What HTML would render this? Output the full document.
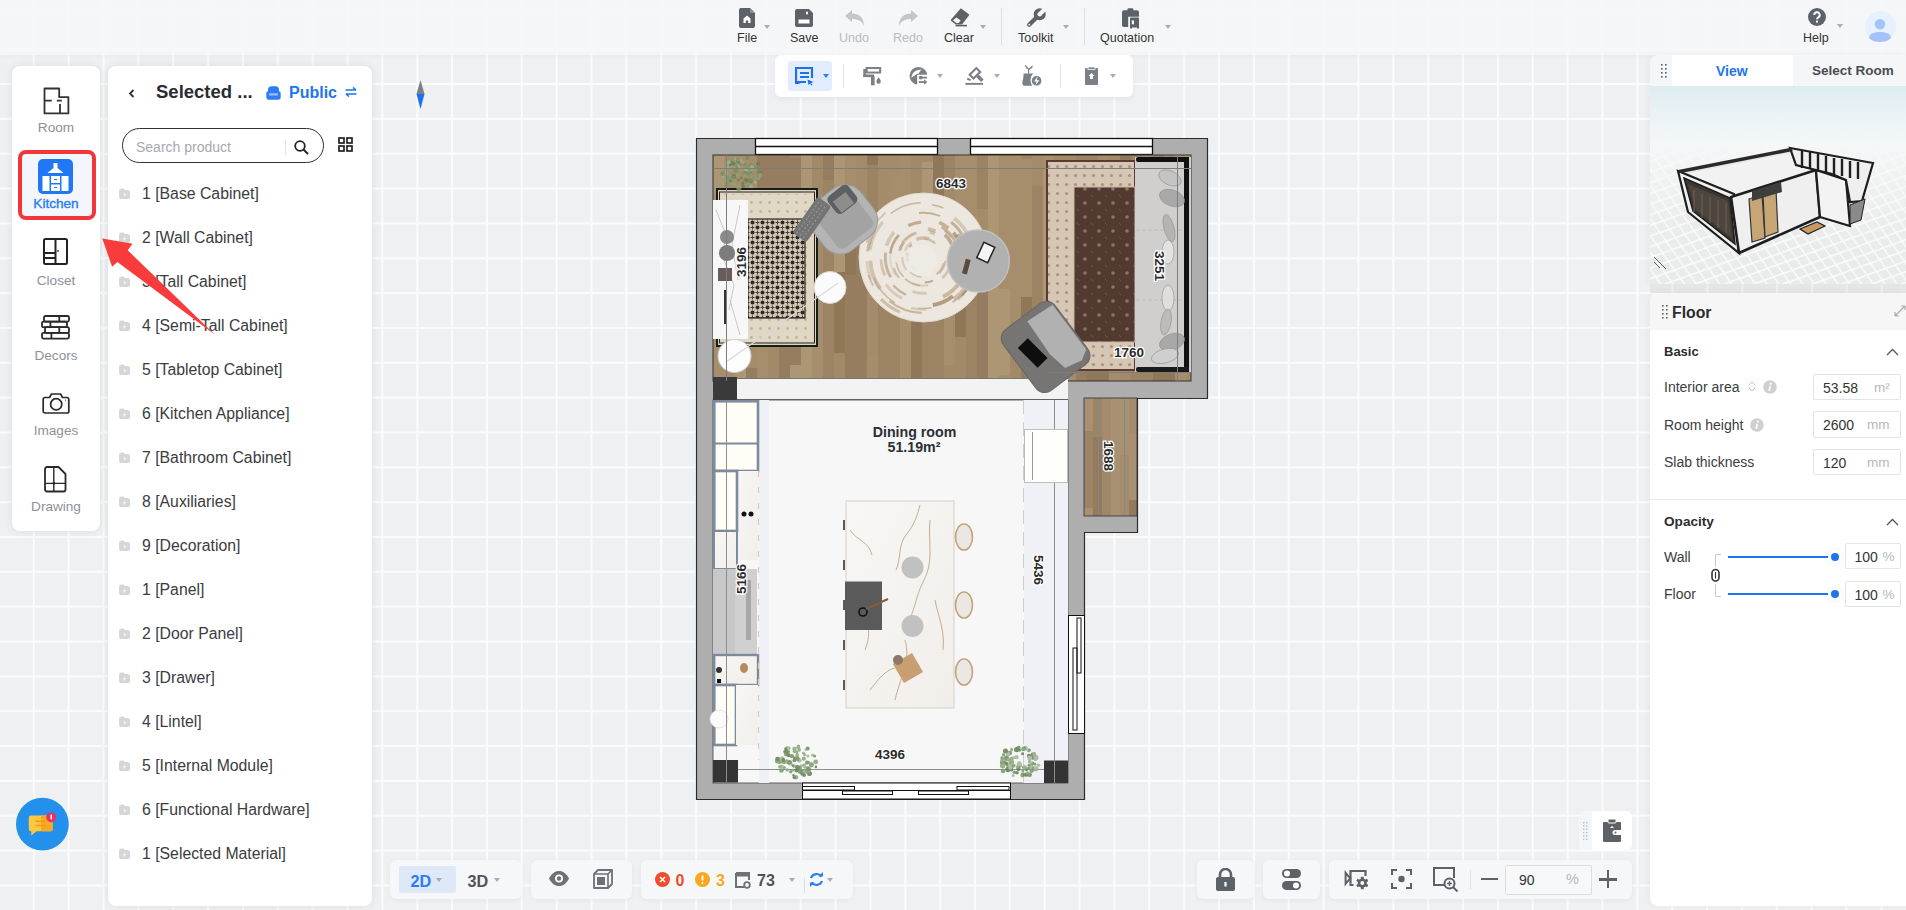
<!DOCTYPE html>
<html><head><meta charset="utf-8">
<style>
*{box-sizing:border-box;margin:0;padding:0}
html,body{width:1906px;height:910px;overflow:hidden;font-family:"Liberation Sans",sans-serif;color:#333}
body{position:relative;background-color:#eff0f2;
background-image:linear-gradient(90deg,#fafbfc 1.5px,transparent 1.5px),linear-gradient(180deg,#fafbfc 1.5px,transparent 1.5px);
background-size:34.867px 34.85px;background-position:32.8px 48.2px}
.abs{position:absolute}
#topbar{position:absolute;left:0;top:0;width:1906px;height:55px;background:rgba(245,246,248,0.93);box-shadow:0 1px 4px rgba(0,0,0,0.04)}
.tb{position:absolute;top:0;height:55px;text-align:center;font-size:13px;color:#333}
.tb .lbl{position:absolute;top:30px;left:0;right:0;text-align:center;white-space:nowrap}
.tb svg{position:absolute}
.dd{position:absolute;width:0;height:0;border-left:3.5px solid transparent;border-right:3.5px solid transparent;border-top:4px solid #a9adb3}
.panel{position:absolute;background:#fff;border-radius:8px;box-shadow:0 0 10px rgba(0,0,0,0.08)}
#leftnav{left:12px;top:66px;width:88px;height:465px}
.nav{position:absolute;left:0;width:88px;text-align:center;font-size:13.6px;color:#8c9199}
#plist{left:108px;top:66px;width:264px;height:840px}
.item{position:absolute;left:34px;font-size:15.8px;color:#3a3c40;white-space:nowrap}
.fold{position:absolute;left:11px;width:11px;height:10px;background:#dcdcdc;border-radius:2px}
.lbl13{font-size:12.5px;color:#333;white-space:nowrap}
.bt{background:#f6f7f8;border-radius:6px;box-shadow:0 1px 5px rgba(0,0,0,0.05)}
.lab{left:14px;font-size:14px;color:#3a3c40;white-space:nowrap}
.inp{left:163px;width:88px;border:1px solid #e2e3e5;border-radius:2px;background:#fff}
.inp .v{position:absolute;left:9px;top:5px;font-size:14px;color:#333}
.inp .u{position:absolute;top:5px;font-size:13.5px;color:#b5b8bc}
.knob{left:181px;width:8px;height:8px;border-radius:50%;background:#1f74ef;box-shadow:0 0 0 3px #fff,0 0 4px 3px rgba(0,0,0,0.08)}
</style></head>
<body>

<!-- TOP BAR -->
<div id="topbar">
 <!-- File -->
 <svg class="abs" style="left:739px;top:8px" width="16" height="20" viewBox="0 0 16 20"><path d="M2 0h9l5 5v13a2 2 0 0 1-2 2H2a2 2 0 0 1-2-2V2a2 2 0 0 1 2-2z" fill="#5d6168"/><path d="M11 0v5h5" fill="#8b8f95"/><path d="M4.5 15V10.5L8 7.5l3.5 3V15h-2.3v-2.6H6.8V15z" fill="#fff"/></svg>
 <div class="abs lbl13" style="left:737px;top:31.3px">File</div>
 <div class="dd" style="left:764px;top:25px"></div>
 <!-- Save -->
 <svg class="abs" style="left:795px;top:9px" width="18" height="18" viewBox="0 0 18 18"><path d="M2 0h12l4 4v12a2 2 0 0 1-2 2H2a2 2 0 0 1-2-2V2a2 2 0 0 1 2-2z" fill="#5d6168"/><rect x="3.5" y="10.5" width="11" height="4" fill="#fff"/><rect x="11" y="2.5" width="2" height="3" rx="1" fill="#fff"/></svg>
 <div class="abs lbl13" style="left:790px;top:31.3px">Save</div>
 <!-- Undo -->
 <svg class="abs" style="left:845px;top:10px" width="20" height="16" viewBox="0 0 20 16"><path d="M0 6L7 0v3.5c7 0 12 4 12 12.5c-2-5-6-7-12-7V12z" fill="#c3c6cb"/></svg>
 <div class="abs lbl13" style="left:839px;top:31.3px;color:#b8bcc2">Undo</div>
 <!-- Redo -->
 <svg class="abs" style="left:898px;top:10px" width="20" height="16" viewBox="0 0 20 16"><path d="M20 6L13 0v3.5c-7 0-12 4-12 12.5c2-5 6-7 12-7V12z" fill="#c3c6cb"/></svg>
 <div class="abs lbl13" style="left:893px;top:31.3px;color:#b8bcc2">Redo</div>
 <!-- Clear -->
 <svg class="abs" style="left:950px;top:8px" width="20" height="19" viewBox="0 0 20 19"><path d="M10.8 0.3L18.9 6.3Q19.4 6.8 18.9 7.4L12 16.4H5.8L1.2 12.9Q0.4 12.2 1.1 11.4Z" fill="#5d6168"/><path d="M2.9 12.2L6.5 9.4L10.7 12.6L8.5 15H6.3Z" fill="#f5f6f8"/><rect x="5.5" y="16.8" width="11.5" height="1.6" fill="#5d6168"/></svg>
 <div class="abs lbl13" style="left:944px;top:31.3px">Clear</div>
 <div class="dd" style="left:980px;top:25px"></div>
 <div class="abs" style="left:1001px;top:8px;width:1px;height:37px;background:#dcdee1"></div>
 <!-- Toolkit -->
 <svg class="abs" style="left:1027px;top:8px" width="20" height="20" viewBox="0 0 20 20"><path d="M12.3 6.7L2.2 16.8" stroke="#5d6168" stroke-width="4.2" stroke-linecap="round"/><circle cx="12.7" cy="6.3" r="6" fill="#5d6168"/><circle cx="12.7" cy="6.3" r="2.2" fill="#f5f6f8"/><path d="M13.2 5.8L19 0" stroke="#f5f6f8" stroke-width="4.2"/><circle cx="2.3" cy="16.7" r="0.9" fill="#f5f6f8"/></svg>
 <div class="abs lbl13" style="left:1018px;top:31.3px">Toolkit</div>
 <div class="dd" style="left:1063px;top:25px"></div>
 <div class="abs" style="left:1084px;top:8px;width:1px;height:37px;background:#dcdee1"></div>
 <!-- Quotation -->
 <svg class="abs" style="left:1122px;top:8px" width="18" height="21" viewBox="0 0 18 21"><path d="M2 2.2h13a2 2 0 0 1 2 2v4.6H6.2V19H2a2 2 0 0 1-2-2V4.2a2 2 0 0 1 2-2z" fill="#5d6168"/><rect x="5.5" y="0.3" width="5.8" height="3" rx="1" fill="#5d6168"/><rect x="8" y="9.6" width="9" height="9.8" rx="1" fill="#5d6168"/><rect x="9.8" y="12.4" width="2.2" height="3.9" fill="#f5f6f8"/><rect x="8" y="18.5" width="2" height="2" fill="#5d6168"/><rect x="15" y="18.5" width="2" height="2" fill="#5d6168"/></svg>
 <div class="abs lbl13" style="left:1100px;top:31.3px">Quotation</div>
 <div class="dd" style="left:1165px;top:25px"></div>
 <!-- Help -->
 <svg class="abs" style="left:1808px;top:8px" width="18" height="18" viewBox="0 0 18 18"><circle cx="9" cy="9" r="9" fill="#5d636b"/><path d="M6.3 7a2.7 2.7 0 1 1 4 2.3c-.9.5-1.3 1-1.3 2" stroke="#fff" stroke-width="2" fill="none"/><rect x="8" y="12.6" width="2" height="2" fill="#fff"/></svg>
 <div class="abs lbl13" style="left:1803px;top:31.3px">Help</div>
 <div class="dd" style="left:1837px;top:24px"></div>
 <!-- Avatar -->
 <svg class="abs" style="left:1865px;top:11px" width="31" height="31" viewBox="0 0 31 31"><circle cx="15.5" cy="15.5" r="15.5" fill="#e7f0fd"/><circle cx="15" cy="13.2" r="5.2" fill="#a4c3fb"/><path d="M4 27c0-4 5-6 11-6s11 2 11 6c-3 3-7 4-11 4s-8-1-11-4z" fill="#a4c3fb"/></svg>
</div>

<!-- LEFT NAV -->
<div id="leftnav" class="panel">
 <!-- Room -->
 <svg class="abs" style="left:30px;top:21px" width="28" height="28" viewBox="0 0 28 28"><path d="M2.5 1.5H17.2V10.2H26.4V26.4H2.5Z" fill="none" stroke="#333" stroke-width="1.8" stroke-linejoin="round"/><path d="M2.5 13.6H9.8M14.8 13.6H19.8M18 17V26.4" stroke="#333" stroke-width="1.8"/></svg>
 <div class="nav" style="top:53.5px">Room</div>
 <!-- Kitchen selected -->
 <div class="abs" style="left:6px;top:84px;width:78px;height:70px;border:4px solid #f2373b;border-radius:8px;background:#f3f7fd"></div>
 <svg class="abs" style="left:26px;top:93px" width="35" height="35" viewBox="0 0 35 35"><rect width="35" height="35" rx="5" fill="#2178f5"/><path d="M15.5 4h4v5l6 5h-16l6-5z" fill="#fff"/><rect x="4.5" y="17" width="7" height="15" fill="#fff"/><rect x="13" y="17" width="9" height="7" fill="#fff"/><rect x="13" y="25.5" width="9" height="6.5" fill="#fff"/><rect x="23.5" y="17" width="7" height="15" fill="#fff"/><path d="M16 20.5h3M16 28.5h3" stroke="#2178f5" stroke-width="1"/></svg>
 <div class="nav" style="top:130px;color:#2b7bf0;-webkit-text-stroke:0.35px #2b7bf0">Kitchen</div>
 <!-- Closet -->
 <svg class="abs" style="left:31px;top:172px" width="25" height="27" viewBox="0 0 25 27"><rect x="1" y="1" width="23" height="25" rx="1.5" fill="none" stroke="#222" stroke-width="2"/><path d="M12.5 1v25M1 15h11.5M1 20h11.5" stroke="#222" stroke-width="2"/><path d="M15 12v2" stroke="#222" stroke-width="1.2"/></svg>
 <div class="nav" style="top:206.5px">Closet</div>
 <!-- Decors -->
 <svg class="abs" style="left:29px;top:249px" width="29" height="25" viewBox="0 0 29 25"><g fill="none" stroke="#2a2a2a" stroke-width="1.8" stroke-linejoin="round"><rect x="3" y="1" width="25" height="5.6" rx="1.5"/><rect x="1" y="6.6" width="25" height="5.6" rx="1.5"/><rect x="4" y="12.2" width="24" height="5.6" rx="1.5"/><rect x="1" y="17.8" width="27" height="5.8" rx="1.5"/><path d="M18.3 1v5.6M9.4 6.6v5.6M18.3 12.2v5.6M10.4 17.8v5.8"/></g></svg>
 <div class="nav" style="top:282px">Decors</div>
 <!-- Images -->
 <svg class="abs" style="left:29.5px;top:327px" width="28" height="21" viewBox="0 0 28 21"><path d="M3 4.5h4.5l2-3.5h9l2 3.5H25a1.8 1.8 0 0 1 1.8 1.8v11.9a1.8 1.8 0 0 1-1.8 1.8H3a1.8 1.8 0 0 1-1.8-1.8V6.3A1.8 1.8 0 0 1 3 4.5z" fill="none" stroke="#2a2a2a" stroke-width="1.7" stroke-linejoin="round"/><circle cx="14.2" cy="11.3" r="5.6" fill="none" stroke="#2a2a2a" stroke-width="1.7"/><circle cx="23.5" cy="7" r="0.6" fill="#2a2a2a"/></svg>
 <div class="nav" style="top:357px">Images</div>
 <!-- Drawing -->
 <svg class="abs" style="left:32px;top:400px" width="23" height="27" viewBox="0 0 23 27"><path d="M3 1h11.5l7 7v15.5a2 2 0 0 1-2 2H3a2 2 0 0 1-2-2V3a2 2 0 0 1 2-2z" fill="none" stroke="#2a2a2a" stroke-width="1.8" stroke-linejoin="round"/><path d="M9.8 1v24.5M1 17.4h20.5" stroke="#2a2a2a" stroke-width="1.4"/><circle cx="9.8" cy="17.4" r="1.4" fill="#2a2a2a"/></svg>
 <div class="nav" style="top:433px">Drawing</div>
</div>

<!-- PRODUCT LIST -->
<div id="plist" class="panel">
 <svg class="abs" style="left:20px;top:23px" width="7" height="9" viewBox="0 0 7 9"><path d="M5.5 1L2 4.5 5.5 8" fill="none" stroke="#333" stroke-width="1.8"/></svg>
 <div class="abs" style="left:48px;top:15px;font-size:18.5px;font-weight:700;color:#2a2c30;white-space:nowrap">Selected ...</div>
 <svg class="abs" style="left:158px;top:20px" width="15" height="14" viewBox="0 0 15 14"><rect x="2" y="0.3" width="11" height="8" rx="3.6" fill="#2d7cf2"/><rect x="0.3" y="5" width="14.4" height="8.7" rx="2.6" fill="#2d7cf2"/><rect x="3" y="7.2" width="9" height="2.4" rx="0.6" fill="#9cc0f8"/></svg>
 <div class="abs" style="left:181px;top:17.5px;font-size:16px;font-weight:700;color:#1f74ef;white-space:nowrap">Public</div>
 <svg class="abs" style="left:237px;top:21px" width="12" height="10" viewBox="0 0 12 10"><path d="M0.5 3h10.5M8 0.5l3 2.5M11.5 7H1M4 9.5L1 7" fill="none" stroke="#1f74ef" stroke-width="1.6"/></svg>
 <div class="abs" style="left:14px;top:62px;width:202px;height:35px;border:1.3px solid #2f3135;border-radius:18px"></div>
 <div class="abs" style="left:28px;top:73px;font-size:14px;color:#a5a9b0;white-space:nowrap">Search product</div>
 <div class="abs" style="left:177px;top:74px;width:1px;height:15px;background:#e3e3e3"></div>
 <svg class="abs" style="left:186px;top:74px" width="15" height="15" viewBox="0 0 15 15"><circle cx="6" cy="6" r="4.8" fill="none" stroke="#222" stroke-width="1.8"/><path d="M9.5 9.5L14 14" stroke="#222" stroke-width="2"/></svg>
 <svg class="abs" style="left:230px;top:71px" width="15" height="15" viewBox="0 0 15 15"><rect x="1" y="1" width="5" height="5" fill="none" stroke="#222" stroke-width="1.7"/><rect x="9" y="1" width="5" height="5" fill="none" stroke="#222" stroke-width="1.7"/><rect x="1" y="9" width="5" height="5" fill="none" stroke="#222" stroke-width="1.7"/><rect x="9" y="9" width="5" height="5" fill="none" stroke="#222" stroke-width="1.7"/></svg>
 <svg class="abs" style="left:11px;top:122px" width="11" height="11" viewBox="0 0 11 11"><path d="M0 3.2Q0 0.6 2.6 0.6H4.6L6 2H8.6Q11 2 11 4.6V8.4Q11 11 8.4 11H2.6Q0 11 0 8.4Z" fill="#d6d6d6"/><path d="M5.5 5v3.6M3.7 6.8h3.6" stroke="#f4f4f4" stroke-width="0.9"/></svg>
 <div class="item" style="top:118.5px">1 [Base Cabinet]</div>
 <svg class="abs" style="left:11px;top:166px" width="11" height="11" viewBox="0 0 11 11"><path d="M0 3.2Q0 0.6 2.6 0.6H4.6L6 2H8.6Q11 2 11 4.6V8.4Q11 11 8.4 11H2.6Q0 11 0 8.4Z" fill="#d6d6d6"/><path d="M5.5 5v3.6M3.7 6.8h3.6" stroke="#f4f4f4" stroke-width="0.9"/></svg>
 <div class="item" style="top:162.5px">2 [Wall Cabinet]</div>
 <svg class="abs" style="left:11px;top:210px" width="11" height="11" viewBox="0 0 11 11"><path d="M0 3.2Q0 0.6 2.6 0.6H4.6L6 2H8.6Q11 2 11 4.6V8.4Q11 11 8.4 11H2.6Q0 11 0 8.4Z" fill="#d6d6d6"/><path d="M5.5 5v3.6M3.7 6.8h3.6" stroke="#f4f4f4" stroke-width="0.9"/></svg>
 <div class="item" style="top:206.5px">3 [Tall Cabinet]</div>
 <svg class="abs" style="left:11px;top:254px" width="11" height="11" viewBox="0 0 11 11"><path d="M0 3.2Q0 0.6 2.6 0.6H4.6L6 2H8.6Q11 2 11 4.6V8.4Q11 11 8.4 11H2.6Q0 11 0 8.4Z" fill="#d6d6d6"/><path d="M5.5 5v3.6M3.7 6.8h3.6" stroke="#f4f4f4" stroke-width="0.9"/></svg>
 <div class="item" style="top:250.5px">4 [Semi-Tall Cabinet]</div>
 <svg class="abs" style="left:11px;top:298px" width="11" height="11" viewBox="0 0 11 11"><path d="M0 3.2Q0 0.6 2.6 0.6H4.6L6 2H8.6Q11 2 11 4.6V8.4Q11 11 8.4 11H2.6Q0 11 0 8.4Z" fill="#d6d6d6"/><path d="M5.5 5v3.6M3.7 6.8h3.6" stroke="#f4f4f4" stroke-width="0.9"/></svg>
 <div class="item" style="top:294.5px">5 [Tabletop Cabinet]</div>
 <svg class="abs" style="left:11px;top:342px" width="11" height="11" viewBox="0 0 11 11"><path d="M0 3.2Q0 0.6 2.6 0.6H4.6L6 2H8.6Q11 2 11 4.6V8.4Q11 11 8.4 11H2.6Q0 11 0 8.4Z" fill="#d6d6d6"/><path d="M5.5 5v3.6M3.7 6.8h3.6" stroke="#f4f4f4" stroke-width="0.9"/></svg>
 <div class="item" style="top:338.5px">6 [Kitchen Appliance]</div>
 <svg class="abs" style="left:11px;top:386px" width="11" height="11" viewBox="0 0 11 11"><path d="M0 3.2Q0 0.6 2.6 0.6H4.6L6 2H8.6Q11 2 11 4.6V8.4Q11 11 8.4 11H2.6Q0 11 0 8.4Z" fill="#d6d6d6"/><path d="M5.5 5v3.6M3.7 6.8h3.6" stroke="#f4f4f4" stroke-width="0.9"/></svg>
 <div class="item" style="top:382.5px">7 [Bathroom Cabinet]</div>
 <svg class="abs" style="left:11px;top:430px" width="11" height="11" viewBox="0 0 11 11"><path d="M0 3.2Q0 0.6 2.6 0.6H4.6L6 2H8.6Q11 2 11 4.6V8.4Q11 11 8.4 11H2.6Q0 11 0 8.4Z" fill="#d6d6d6"/><path d="M5.5 5v3.6M3.7 6.8h3.6" stroke="#f4f4f4" stroke-width="0.9"/></svg>
 <div class="item" style="top:426.5px">8 [Auxiliaries]</div>
 <svg class="abs" style="left:11px;top:474px" width="11" height="11" viewBox="0 0 11 11"><path d="M0 3.2Q0 0.6 2.6 0.6H4.6L6 2H8.6Q11 2 11 4.6V8.4Q11 11 8.4 11H2.6Q0 11 0 8.4Z" fill="#d6d6d6"/><path d="M5.5 5v3.6M3.7 6.8h3.6" stroke="#f4f4f4" stroke-width="0.9"/></svg>
 <div class="item" style="top:470.5px">9 [Decoration]</div>
 <svg class="abs" style="left:11px;top:518px" width="11" height="11" viewBox="0 0 11 11"><path d="M0 3.2Q0 0.6 2.6 0.6H4.6L6 2H8.6Q11 2 11 4.6V8.4Q11 11 8.4 11H2.6Q0 11 0 8.4Z" fill="#d6d6d6"/><path d="M5.5 5v3.6M3.7 6.8h3.6" stroke="#f4f4f4" stroke-width="0.9"/></svg>
 <div class="item" style="top:514.5px">1 [Panel]</div>
 <svg class="abs" style="left:11px;top:562px" width="11" height="11" viewBox="0 0 11 11"><path d="M0 3.2Q0 0.6 2.6 0.6H4.6L6 2H8.6Q11 2 11 4.6V8.4Q11 11 8.4 11H2.6Q0 11 0 8.4Z" fill="#d6d6d6"/><path d="M5.5 5v3.6M3.7 6.8h3.6" stroke="#f4f4f4" stroke-width="0.9"/></svg>
 <div class="item" style="top:558.5px">2 [Door Panel]</div>
 <svg class="abs" style="left:11px;top:606px" width="11" height="11" viewBox="0 0 11 11"><path d="M0 3.2Q0 0.6 2.6 0.6H4.6L6 2H8.6Q11 2 11 4.6V8.4Q11 11 8.4 11H2.6Q0 11 0 8.4Z" fill="#d6d6d6"/><path d="M5.5 5v3.6M3.7 6.8h3.6" stroke="#f4f4f4" stroke-width="0.9"/></svg>
 <div class="item" style="top:602.5px">3 [Drawer]</div>
 <svg class="abs" style="left:11px;top:650px" width="11" height="11" viewBox="0 0 11 11"><path d="M0 3.2Q0 0.6 2.6 0.6H4.6L6 2H8.6Q11 2 11 4.6V8.4Q11 11 8.4 11H2.6Q0 11 0 8.4Z" fill="#d6d6d6"/><path d="M5.5 5v3.6M3.7 6.8h3.6" stroke="#f4f4f4" stroke-width="0.9"/></svg>
 <div class="item" style="top:646.5px">4 [Lintel]</div>
 <svg class="abs" style="left:11px;top:694px" width="11" height="11" viewBox="0 0 11 11"><path d="M0 3.2Q0 0.6 2.6 0.6H4.6L6 2H8.6Q11 2 11 4.6V8.4Q11 11 8.4 11H2.6Q0 11 0 8.4Z" fill="#d6d6d6"/><path d="M5.5 5v3.6M3.7 6.8h3.6" stroke="#f4f4f4" stroke-width="0.9"/></svg>
 <div class="item" style="top:690.5px">5 [Internal Module]</div>
 <svg class="abs" style="left:11px;top:738px" width="11" height="11" viewBox="0 0 11 11"><path d="M0 3.2Q0 0.6 2.6 0.6H4.6L6 2H8.6Q11 2 11 4.6V8.4Q11 11 8.4 11H2.6Q0 11 0 8.4Z" fill="#d6d6d6"/><path d="M5.5 5v3.6M3.7 6.8h3.6" stroke="#f4f4f4" stroke-width="0.9"/></svg>
 <div class="item" style="top:734.5px">6 [Functional Hardware]</div>
 <svg class="abs" style="left:11px;top:782px" width="11" height="11" viewBox="0 0 11 11"><path d="M0 3.2Q0 0.6 2.6 0.6H4.6L6 2H8.6Q11 2 11 4.6V8.4Q11 11 8.4 11H2.6Q0 11 0 8.4Z" fill="#d6d6d6"/><path d="M5.5 5v3.6M3.7 6.8h3.6" stroke="#f4f4f4" stroke-width="0.9"/></svg>
 <div class="item" style="top:778.5px">1 [Selected Material]</div>
</div>


<!-- FLOATING TOOLBAR -->
<div class="abs" style="left:775px;top:55px;width:358px;height:42px;background:#fff;border-radius:6px;box-shadow:0 2px 6px rgba(0,0,0,0.05)">
 <div class="abs" style="left:13px;top:6px;width:44px;height:30px;background:#e1edfd;border-radius:3px"></div>
 <svg class="abs" style="left:20px;top:12px" width="19" height="19" viewBox="0 0 19 19"><path d="M1 17V1h16v10" fill="none" stroke="#1f6ff0" stroke-width="2.2"/><path d="M1 17v-2h10" stroke="#1f6ff0" stroke-width="2"/><path d="M5 6h9M5 10h9" stroke="#1f6ff0" stroke-width="2.2"/><path d="M12.5 12.5l6 2.5-2.5 1 1.5 2-1 .5-1.5-2-1.5 1.5z" fill="#1f6ff0"/></svg>
 <div class="dd" style="left:48px;top:19px;border-top-color:#2f7cf2"></div>
 <div class="abs" style="left:68px;top:9px;width:1px;height:24px;background:#e3e4e6"></div>
 <svg class="abs" style="left:88px;top:12px" width="20" height="19" viewBox="0 0 20 19"><rect x="2.5" y="0" width="15.7" height="6.4" rx="0.6" fill="#7b7f86"/><rect x="4.7" y="2" width="11.4" height="2.6" fill="#fff"/><rect x="0.3" y="2" width="2.6" height="8" fill="#7b7f86"/><rect x="0.3" y="7.5" width="10.8" height="2.6" fill="#7b7f86"/><rect x="8" y="9.5" width="3.6" height="8.8" fill="#7b7f86"/><path d="M15.6 10.2c-1.6 2.1-2.2 3.2-2.2 4.3a2.2 2.2 0 0 0 4.4 0c0-1.1-.6-2.2-2.2-4.3z" fill="#7b7f86"/></svg>
 <svg class="abs" style="left:134px;top:12px" width="20" height="19" viewBox="0 0 20 19"><path d="M18.1 7.7A8.8 8.8 0 1 0 8.2 17.55V7.7Z" fill="#7b7f86"/><path d="M2.6 11.2C2.4 6.4 6.4 2.4 12.8 2.6C11 4 10.3 5.1 10 6.6C8 6.7 6.4 7.5 5.8 8.8C4.6 9 3.6 9.8 2.6 11.2z" fill="#fff"/><path d="M11.2 10.6H18" stroke="#7b7f86" stroke-width="1.8"/><circle cx="11.7" cy="10.6" r="1.9" fill="#7b7f86"/><path d="M9.8 15H16" stroke="#7b7f86" stroke-width="1.8"/><path d="M15.2 12.3L18.3 15L15.2 17.8z" fill="#7b7f86"/></svg>
 <div class="dd" style="left:162px;top:19px"></div>
 <svg class="abs" style="left:190px;top:12px" width="19" height="19" viewBox="0 0 19 19"><g transform="rotate(-45 10 6.4)"><rect x="5.3" y="3.6" width="9.4" height="5.4" fill="none" stroke="#7b7f86" stroke-width="2.1"/><rect x="8.2" y="9.8" width="3.6" height="7" fill="#7b7f86"/></g><path d="M2.2 11.6l3.4 1.6" stroke="#7b7f86" stroke-width="2"/><rect x="0.4" y="15.9" width="17.6" height="1.9" fill="#7b7f86"/></svg>
 <div class="dd" style="left:219px;top:19px"></div>
 <svg class="abs" style="left:247px;top:10px" width="21" height="22" viewBox="0 0 21 22"><path d="M6.6 8.8V3.8M6.6 4.2L3 0.4M6.6 4.8L10.5 1M4.2 1.2l.8 2.4M9 3l1.2-.6" stroke="#7b7f86" stroke-width="1.2" fill="none"/><path d="M1.6 8.6H11.5C9.6 10 8.6 12.5 8.6 15.5c0 2.4.8 4.2 1.8 5.2H2.4C1 20.7.3 19.5.3 17.8c0-2.2 1-3 1-5.2z" fill="#7b7f86"/><circle cx="14.6" cy="15.8" r="5.3" fill="#7b7f86" stroke="#fff" stroke-width="1"/><path d="M15.6 11.6l-3.6 5h2.6l-1 3.6 3.8-5h-2.6z" fill="#fff"/></svg>
 <div class="abs" style="left:285px;top:9px;width:1px;height:24px;background:#e3e4e6"></div>
 <svg class="abs" style="left:310px;top:12px" width="13" height="18" viewBox="0 0 13 18"><rect x="0" y="1" width="13" height="17" rx="1" fill="#7b7f86"/><rect x="3" y="0" width="7" height="2.5" fill="#7b7f86" stroke="#fff" stroke-width="0.8"/><path d="M6.5 6l3 3H8v3H5V9H3.5z" fill="#fff"/></svg>
 <div class="dd" style="left:335px;top:19px"></div>
</div>

<!-- BOTTOM LEFT TOOLBARS -->
<div class="abs bt" style="left:390px;top:860px;width:132px;height:39px"></div>
<div class="abs" style="left:399px;top:866px;width:57px;height:27px;background:#dde8f9;border-radius:2px"></div>
<div class="abs" style="left:410.5px;top:871.5px;font-size:16.2px;font-weight:700;color:#2a7cf2">2D</div>
<div class="dd" style="left:436px;top:878px;border-top-color:#a9adb3"></div>
<div class="abs" style="left:467.5px;top:871.5px;font-size:16.2px;font-weight:700;color:#50545a">3D</div>
<div class="dd" style="left:494px;top:878px"></div>
<div class="abs bt" style="left:531px;top:860px;width:101px;height:39px"></div>
<svg class="abs" style="left:549px;top:871px" width="20" height="15" viewBox="0 0 20 15"><path d="M0 7.5C2.5 2.5 6 0 10 0s7.5 2.5 10 7.5C17.5 12.5 14 15 10 15S2.5 12.5 0 7.5z" fill="#6d7178"/><circle cx="10" cy="7.5" r="4" fill="#fff"/><circle cx="10" cy="7.5" r="2.2" fill="#6d7178"/></svg>
<svg class="abs" style="left:593px;top:869px" width="20" height="20" viewBox="0 0 20 20"><path d="M1 5l4-4h14v14l-4 4H1z" fill="none" stroke="#6d7178" stroke-width="1.8" stroke-linejoin="round"/><path d="M1 5h14v14M15 5l4-4" fill="none" stroke="#6d7178" stroke-width="1.6"/><rect x="4" y="8" width="8" height="8" fill="#6d7178"/></svg>
<div class="abs bt" style="left:641px;top:860px;width:212px;height:39px"></div>
<svg class="abs" style="left:655px;top:872px" width="15" height="15" viewBox="0 0 15 15"><circle cx="7.5" cy="7.5" r="7.5" fill="#f04b2c"/><path d="M5 5l5 5M10 5l-5 5" stroke="#fff" stroke-width="1.6"/></svg>
<div class="abs" style="left:675.5px;top:871.5px;font-size:16px;font-weight:700;color:#f04b2c">0</div>
<svg class="abs" style="left:695px;top:872px" width="15" height="15" viewBox="0 0 15 15"><circle cx="7.5" cy="7.5" r="7.5" fill="#f7a81c"/><path d="M7.5 3.5v5" stroke="#fff" stroke-width="1.8"/><circle cx="7.5" cy="11" r="1" fill="#fff"/></svg>
<div class="abs" style="left:716px;top:871.5px;font-size:16px;font-weight:700;color:#f7a81c">3</div>
<svg class="abs" style="left:735px;top:871px" width="16" height="18" viewBox="0 0 16 18"><path d="M1 2h13v7" fill="none" stroke="#6d7178" stroke-width="2"/><path d="M1 2v14h8" fill="none" stroke="#6d7178" stroke-width="2"/><rect x="1" y="2" width="13" height="3.5" fill="#6d7178"/><circle cx="12" cy="14" r="2.8" fill="none" stroke="#6d7178" stroke-width="1.8"/></svg>
<div class="abs" style="left:757px;top:871.5px;font-size:16px;font-weight:700;color:#50545a">73</div>
<div class="dd" style="left:789px;top:878px"></div>
<div class="abs" style="left:804px;top:878px;width:1px;height:15px;background:#dcdde0"></div>
<svg class="abs" style="left:809px;top:872px" width="15" height="15" viewBox="0 0 15 15"><path d="M12.5 4.5A6 6 0 0 0 2 6" fill="none" stroke="#2a7cf2" stroke-width="2.2"/><path d="M2.5 10.5A6 6 0 0 0 13 9" fill="none" stroke="#2a7cf2" stroke-width="2.2"/><path d="M9.5 4.5h4.5V0z" fill="#2a7cf2"/><path d="M5.5 10.5H1V15z" fill="#2a7cf2"/></svg>
<div class="dd" style="left:827px;top:878px"></div>

<!-- BOTTOM RIGHT TOOLBARS -->
<div class="abs" style="left:1579px;top:811px;width:53px;height:39px;background:#fff;border-radius:6px;overflow:hidden"><div class="abs" style="left:0;top:0;width:13px;height:39px;background:#f4f5f6"></div></div>
<svg class="abs" style="left:1583px;top:822px" width="5" height="18" viewBox="0 0 5 18"><g fill="#b9bcc1"><rect x="0" y="0" width="1.4" height="1.4"/><rect x="3" y="0" width="1.4" height="1.4"/><rect x="0" y="3.3" width="1.4" height="1.4"/><rect x="3" y="3.3" width="1.4" height="1.4"/><rect x="0" y="6.6" width="1.4" height="1.4"/><rect x="3" y="6.6" width="1.4" height="1.4"/><rect x="0" y="9.9" width="1.4" height="1.4"/><rect x="3" y="9.9" width="1.4" height="1.4"/><rect x="0" y="13.2" width="1.4" height="1.4"/><rect x="3" y="13.2" width="1.4" height="1.4"/><rect x="0" y="16.5" width="1.4" height="1.4"/><rect x="3" y="16.5" width="1.4" height="1.4"/></g></svg>
<svg class="abs" style="left:1603px;top:819px" width="19" height="23" viewBox="0 0 19 23"><rect x="0" y="3" width="18" height="20" rx="1" fill="#5d6168"/><rect x="5" y="0" width="8" height="4" rx="1" fill="#5d6168" stroke="#fff" stroke-width="1"/><path d="M9 7l2 2H7z" fill="#fff"/><path d="M19 11h-7a2.5 2.5 0 0 0 0 5h7" fill="#fff"/><circle cx="12.5" cy="13.5" r="1" fill="#5d6168"/></svg>
<div class="abs bt" style="left:1197px;top:860px;width:57px;height:39px"></div>
<svg class="abs" style="left:1216px;top:868px" width="19" height="23" viewBox="0 0 19 23"><path d="M4 10V6.5a5.5 5.5 0 0 1 11 0V10" fill="none" stroke="#5d6168" stroke-width="2.6"/><rect x="0" y="9" width="19" height="14" rx="2" fill="#5d6168"/><rect x="8.4" y="14" width="2.2" height="4.5" fill="#fff"/></svg>
<div class="abs bt" style="left:1263px;top:860px;width:57px;height:39px"></div>
<svg class="abs" style="left:1282px;top:869px" width="19" height="21" viewBox="0 0 19 21"><rect x="0" y="0" width="19" height="9" rx="4.5" fill="#5d6168"/><circle cx="5" cy="4.5" r="3" fill="#fff"/><rect x="0" y="12" width="19" height="9" rx="4.5" fill="#5d6168"/><circle cx="14" cy="16.5" r="3" fill="#fff"/></svg>
<div class="abs bt" style="left:1329px;top:860px;width:303px;height:39px"></div>
<svg class="abs" style="left:1344px;top:869px" width="24" height="21" viewBox="0 0 24 21"><path d="M1.6 3.8v11l4.6-5.5z" fill="none" stroke="#5d6168" stroke-width="2" stroke-linejoin="miter"/><path d="M6.5 14.5V2h15v5" fill="none" stroke="#5d6168" stroke-width="2.2"/><path d="M6.5 14.5v1.5h3" fill="none" stroke="#5d6168" stroke-width="2.2"/><circle cx="18.3" cy="14" r="7" fill="#f6f7f8"/><g transform="translate(18.3 14)"><circle r="4.6" fill="#5d6168"/><g fill="#5d6168"><rect x="-1.4" y="-6.3" width="2.8" height="12.6" rx="0.6"/><rect x="-1.4" y="-6.3" width="2.8" height="12.6" rx="0.6" transform="rotate(60)"/><rect x="-1.4" y="-6.3" width="2.8" height="12.6" rx="0.6" transform="rotate(120)"/></g><circle r="2" fill="#f6f7f8"/></g></svg>
<svg class="abs" style="left:1391px;top:869px" width="21" height="20" viewBox="0 0 21 20"><path d="M1 6V1h5M15 1h5v5M20 14v5h-5M6 19H1v-5" fill="none" stroke="#5d6168" stroke-width="2"/><circle cx="10.5" cy="10" r="3.2" fill="#5d6168"/></svg>
<svg class="abs" style="left:1433px;top:867px" width="26" height="25" viewBox="0 0 26 25"><path d="M12 18H1V1h20v10" fill="none" stroke="#5d6168" stroke-width="2"/><circle cx="16.5" cy="16.5" r="5" fill="#f6f7f8" stroke="#5d6168" stroke-width="2"/><path d="M16.5 14v5M14 16.5h5" stroke="#5d6168" stroke-width="1.4"/><path d="M20 20l4.5 4.5" stroke="#5d6168" stroke-width="2"/></svg>
<div class="abs" style="left:1470px;top:870px;width:1px;height:19px;background:#e0e1e3"></div>
<div class="abs" style="left:1481px;top:878px;width:17px;height:2.4px;background:#5d6168"></div>
<div class="abs" style="left:1505px;top:865px;width:87px;height:30px;border:1px solid #dcdde0;border-radius:2px;background:#f7f8f9"></div>
<div class="abs" style="left:1519px;top:872px;font-size:14px;color:#333">90</div>
<div class="abs" style="left:1566px;top:871px;font-size:14.5px;color:#b3b6bb">%</div>
<div class="abs" style="left:1599px;top:878px;width:18px;height:2.6px;background:#5d6168"></div>
<div class="abs" style="left:1606.7px;top:870px;width:2.6px;height:18px;background:#5d6168"></div>

<!-- CHAT BUTTON -->
<svg class="abs" style="left:15px;top:797px" width="55" height="55" viewBox="0 0 55 55"><circle cx="27.4" cy="27.2" r="26.4" fill="#2391eb"/><path d="M15.8 18.5h19.8a2 2 0 0 1 2 2v11.7a2 2 0 0 1-2 2H21.5l-5.2 4.2v-4.2h-.5a2 2 0 0 1-2-2V20.5a2 2 0 0 1 2-2z" fill="#fbc83f"/><path d="M26 18.5h9.6a2 2 0 0 1 2 2v11.7a2 2 0 0 1-2 2H26z" fill="#f9a823"/><path d="M20.5 24.3h10M20.5 28.5h10" stroke="#ef9a1c" stroke-width="1.4"/><circle cx="36.2" cy="20.3" r="4.9" fill="#ec2f62"/><rect x="35.5" y="17.6" width="1.5" height="4.8" fill="#fff"/></svg>



<!-- FLOOR PLAN -->
<svg class="abs" style="left:0;top:0" width="1906" height="910" viewBox="0 0 1906 910">
 <defs>
  <pattern id="wood" width="24" height="130" patternUnits="userSpaceOnUse" x="713" y="155">
   <rect width="24" height="130" fill="#b39472"/>
   <rect x="0" y="0" width="12" height="75" fill="#b89975"/>
   <rect x="12" y="45" width="12" height="85" fill="#ae8f6c"/>
   <rect x="0" y="75" width="12" height="55" fill="#b1916f"/>
   <rect x="3" y="10" width="1" height="50" fill="#a88a69" opacity="0.5"/>
   <rect x="17" y="60" width="1" height="60" fill="#a4866a" opacity="0.5"/>
  </pattern>
  <pattern id="wood2" width="18" height="90" patternUnits="userSpaceOnUse" x="1084" y="398">
   <rect width="18" height="90" fill="#a9896a"/>
   <rect x="0" y="0" width="9" height="55" fill="#b29475"/>
   <rect x="9" y="30" width="9" height="60" fill="#9f8062"/>
  </pattern>
  <pattern id="rugL" width="10" height="10" patternUnits="userSpaceOnUse">
   <rect width="10" height="10" fill="#d0c6b3"/><circle cx="2.5" cy="2.5" r="2" fill="#2e2823"/><circle cx="7.5" cy="7.5" r="2" fill="#2e2823"/><path d="M7.5 0.5v4M5.5 2.5h4M2.5 5.5v4M0.5 7.5h4" stroke="#4a423a" stroke-width="1"/>
  </pattern>
  <pattern id="rugLb" width="9" height="9" patternUnits="userSpaceOnUse">
   <rect width="9" height="9" fill="#e0d7c5"/><circle cx="4.5" cy="4.5" r="1.4" fill="#c0b39c"/>
  </pattern>
  <pattern id="rugR" width="14" height="14" patternUnits="userSpaceOnUse">
   <rect width="14" height="14" fill="#523a30"/><circle cx="7" cy="7" r="1.8" fill="#8f7565"/><circle cx="0" cy="0" r="1.3" fill="#6e5446"/><circle cx="14" cy="14" r="1.3" fill="#6e5446"/>
  </pattern>
  <pattern id="rugRb" width="9" height="9" patternUnits="userSpaceOnUse">
   <rect width="9" height="9" fill="#d6c6b4"/><circle cx="4.5" cy="4.5" r="1.6" fill="#ae9281"/>
  </pattern>
  <radialGradient id="rugRound" cx="0.5" cy="0.5" r="0.5">
   <stop offset="0" stop-color="#f1ece4"/><stop offset="0.3" stop-color="#eae2d4"/><stop offset="0.45" stop-color="#c9b596"/><stop offset="0.55" stop-color="#eee7db"/><stop offset="0.7" stop-color="#d7c7ac"/><stop offset="0.82" stop-color="#efe9de"/><stop offset="0.95" stop-color="#e6dccb"/><stop offset="1" stop-color="#ebe4d8"/>
  </radialGradient>
  <linearGradient id="marble" x1="0" y1="0" x2="1" y2="1"><stop offset="0" stop-color="#f8f7f5"/><stop offset="1" stop-color="#f1eeea"/></linearGradient>
 </defs>
 <!-- walls -->
 <path d="M696.5 138.5H1207.5V398.5H1137.5V532.5H1084.5V799.5H696.5Z" fill="#aeaeae" stroke="#2c2c2c" stroke-width="1.2"/>
 <!-- top windows -->
 <g stroke="#111" stroke-width="1.3" fill="#fff">
  <rect x="755.5" y="138.5" width="182" height="16"/><path d="M755.5 146.5h182"/>
  <rect x="970.5" y="138.5" width="182" height="16"/><path d="M970.5 146.5h182"/>
 </g>
 <!-- upper room floor -->
 <clipPath id="upclip"><rect x="713" y="155" width="478" height="226"/></clipPath><g clip-path="url(#upclip)"><rect x="713" y="114" width="11" height="79" fill="#ad9674"/><rect x="713" y="193" width="11" height="66" fill="#a68e6d"/><rect x="713" y="259" width="11" height="128" fill="#a68e6d"/><rect x="724" y="109" width="11" height="134" fill="#a68e6d"/><rect x="724" y="243" width="11" height="124" fill="#a28a69"/><rect x="724" y="367" width="11" height="64" fill="#a68e6d"/><rect x="735" y="100" width="11" height="113" fill="#a68e6d"/><rect x="735" y="213" width="11" height="90" fill="#a68e6d"/><rect x="735" y="303" width="11" height="130" fill="#ad9674"/><rect x="746" y="148" width="11" height="132" fill="#a68e6d"/><rect x="746" y="280" width="11" height="88" fill="#a48c6b"/><rect x="746" y="368" width="11" height="140" fill="#967d5f"/><rect x="757" y="148" width="11" height="133" fill="#967d5f"/><rect x="757" y="281" width="11" height="110" fill="#a68e6d"/><rect x="768" y="127" width="11" height="65" fill="#967d5f"/><rect x="768" y="192" width="11" height="77" fill="#9c8364"/><rect x="768" y="269" width="11" height="113" fill="#a28a69"/><rect x="779" y="86" width="11" height="75" fill="#967d5f"/><rect x="779" y="161" width="11" height="99" fill="#967d5f"/><rect x="779" y="260" width="11" height="83" fill="#a68e6d"/><rect x="779" y="343" width="11" height="134" fill="#967d5f"/><rect x="790" y="74" width="11" height="84" fill="#9c8364"/><rect x="790" y="158" width="11" height="72" fill="#967d5f"/><rect x="790" y="230" width="11" height="68" fill="#967d5f"/><rect x="790" y="298" width="11" height="67" fill="#967d5f"/><rect x="790" y="365" width="11" height="86" fill="#ad9674"/><rect x="801" y="68" width="11" height="128" fill="#ad9674"/><rect x="801" y="196" width="11" height="100" fill="#ad9674"/><rect x="801" y="296" width="11" height="134" fill="#ad9674"/><rect x="812" y="109" width="11" height="98" fill="#a28a69"/><rect x="812" y="207" width="11" height="83" fill="#a48c6b"/><rect x="812" y="290" width="11" height="91" fill="#a68e6d"/><rect x="823" y="82" width="11" height="98" fill="#967d5f"/><rect x="823" y="180" width="11" height="123" fill="#9c8364"/><rect x="823" y="303" width="11" height="117" fill="#9c8364"/><rect x="834" y="78" width="11" height="69" fill="#a68e6d"/><rect x="834" y="147" width="11" height="125" fill="#ad9674"/><rect x="834" y="272" width="11" height="81" fill="#8f7758"/><rect x="834" y="353" width="11" height="103" fill="#a28a69"/><rect x="845" y="93" width="11" height="113" fill="#a68e6d"/><rect x="845" y="206" width="11" height="69" fill="#8f7758"/><rect x="845" y="275" width="11" height="131" fill="#967d5f"/><rect x="856" y="115" width="11" height="103" fill="#a48c6b"/><rect x="856" y="218" width="11" height="104" fill="#967d5f"/><rect x="856" y="322" width="11" height="123" fill="#967d5f"/><rect x="867" y="97" width="11" height="68" fill="#8f7758"/><rect x="867" y="165" width="11" height="71" fill="#9c8364"/><rect x="867" y="236" width="11" height="120" fill="#a48c6b"/><rect x="867" y="356" width="11" height="68" fill="#a68e6d"/><rect x="878" y="62" width="11" height="99" fill="#a48c6b"/><rect x="878" y="161" width="11" height="133" fill="#a48c6b"/><rect x="878" y="294" width="11" height="117" fill="#9c8364"/><rect x="889" y="64" width="11" height="109" fill="#a48c6b"/><rect x="889" y="173" width="11" height="104" fill="#a68e6d"/><rect x="889" y="277" width="11" height="119" fill="#9c8364"/><rect x="900" y="134" width="11" height="138" fill="#a68e6d"/><rect x="900" y="272" width="11" height="123" fill="#a68e6d"/><rect x="911" y="128" width="11" height="96" fill="#a28a69"/><rect x="911" y="224" width="11" height="91" fill="#ad9674"/><rect x="911" y="315" width="11" height="110" fill="#8f7758"/><rect x="922" y="92" width="11" height="70" fill="#a28a69"/><rect x="922" y="162" width="11" height="117" fill="#ad9674"/><rect x="922" y="279" width="11" height="130" fill="#9c8364"/><rect x="933" y="138" width="11" height="115" fill="#8f7758"/><rect x="933" y="253" width="11" height="130" fill="#9c8364"/><rect x="944" y="65" width="11" height="113" fill="#9c8364"/><rect x="944" y="178" width="11" height="108" fill="#a28a69"/><rect x="944" y="286" width="11" height="79" fill="#a68e6d"/><rect x="944" y="365" width="11" height="82" fill="#a28a69"/><rect x="955" y="126" width="11" height="89" fill="#a68e6d"/><rect x="955" y="215" width="11" height="122" fill="#8f7758"/><rect x="955" y="337" width="11" height="135" fill="#a28a69"/><rect x="966" y="122" width="11" height="96" fill="#a68e6d"/><rect x="966" y="218" width="11" height="78" fill="#ad9674"/><rect x="966" y="296" width="11" height="128" fill="#9c8364"/><rect x="977" y="77" width="11" height="132" fill="#9c8364"/><rect x="977" y="209" width="11" height="76" fill="#a48c6b"/><rect x="977" y="285" width="11" height="125" fill="#967d5f"/><rect x="988" y="72" width="11" height="66" fill="#ad9674"/><rect x="988" y="138" width="11" height="131" fill="#ad9674"/><rect x="988" y="269" width="11" height="110" fill="#ad9674"/><rect x="988" y="379" width="11" height="110" fill="#a68e6d"/><rect x="999" y="94" width="11" height="111" fill="#a68e6d"/><rect x="999" y="205" width="11" height="84" fill="#a68e6d"/><rect x="999" y="289" width="11" height="86" fill="#ad9674"/><rect x="999" y="375" width="11" height="80" fill="#a68e6d"/><rect x="1010" y="112" width="11" height="136" fill="#a68e6d"/><rect x="1010" y="248" width="11" height="73" fill="#a68e6d"/><rect x="1010" y="321" width="11" height="132" fill="#a28a69"/><rect x="1021" y="87" width="11" height="72" fill="#9c8364"/><rect x="1021" y="159" width="11" height="138" fill="#a68e6d"/><rect x="1021" y="297" width="11" height="69" fill="#8f7758"/><rect x="1021" y="366" width="11" height="86" fill="#967d5f"/><rect x="1032" y="107" width="11" height="79" fill="#a48c6b"/><rect x="1032" y="186" width="11" height="92" fill="#9c8364"/><rect x="1032" y="278" width="11" height="137" fill="#9c8364"/><rect x="1043" y="95" width="11" height="75" fill="#a68e6d"/><rect x="1043" y="170" width="11" height="122" fill="#ad9674"/><rect x="1043" y="292" width="11" height="121" fill="#ad9674"/><rect x="1054" y="116" width="11" height="70" fill="#a28a69"/><rect x="1054" y="186" width="11" height="73" fill="#a48c6b"/><rect x="1054" y="259" width="11" height="103" fill="#a48c6b"/><rect x="1054" y="362" width="11" height="93" fill="#ad9674"/><rect x="1065" y="67" width="11" height="80" fill="#967d5f"/><rect x="1065" y="147" width="11" height="62" fill="#a28a69"/><rect x="1065" y="209" width="11" height="127" fill="#9c8364"/><rect x="1065" y="336" width="11" height="78" fill="#a48c6b"/><rect x="1076" y="86" width="11" height="63" fill="#8f7758"/><rect x="1076" y="149" width="11" height="127" fill="#9c8364"/><rect x="1076" y="276" width="11" height="71" fill="#a48c6b"/><rect x="1076" y="347" width="11" height="93" fill="#967d5f"/><rect x="1087" y="109" width="11" height="81" fill="#9c8364"/><rect x="1087" y="190" width="11" height="88" fill="#967d5f"/><rect x="1087" y="278" width="11" height="129" fill="#8f7758"/><rect x="1098" y="91" width="11" height="102" fill="#a48c6b"/><rect x="1098" y="193" width="11" height="88" fill="#967d5f"/><rect x="1098" y="281" width="11" height="84" fill="#8f7758"/><rect x="1098" y="365" width="11" height="90" fill="#8f7758"/><rect x="1109" y="104" width="11" height="89" fill="#a28a69"/><rect x="1109" y="193" width="11" height="126" fill="#ad9674"/><rect x="1109" y="319" width="11" height="105" fill="#a48c6b"/><rect x="1120" y="152" width="11" height="63" fill="#8f7758"/><rect x="1120" y="215" width="11" height="95" fill="#ad9674"/><rect x="1120" y="310" width="11" height="93" fill="#a28a69"/><rect x="1131" y="67" width="11" height="137" fill="#9c8364"/><rect x="1131" y="204" width="11" height="117" fill="#8f7758"/><rect x="1131" y="321" width="11" height="104" fill="#9c8364"/><rect x="1142" y="145" width="11" height="88" fill="#a68e6d"/><rect x="1142" y="233" width="11" height="89" fill="#ad9674"/><rect x="1142" y="322" width="11" height="85" fill="#9c8364"/><rect x="1153" y="129" width="11" height="121" fill="#967d5f"/><rect x="1153" y="250" width="11" height="138" fill="#8f7758"/><rect x="1164" y="155" width="11" height="121" fill="#a48c6b"/><rect x="1164" y="276" width="11" height="104" fill="#8f7758"/><rect x="1164" y="380" width="11" height="70" fill="#8f7758"/><rect x="1175" y="71" width="11" height="75" fill="#ad9674"/><rect x="1175" y="146" width="11" height="85" fill="#ad9674"/><rect x="1175" y="231" width="11" height="82" fill="#ad9674"/><rect x="1175" y="313" width="11" height="102" fill="#a68e6d"/><rect x="1186" y="63" width="11" height="110" fill="#ad9674"/><rect x="1186" y="173" width="11" height="111" fill="#a48c6b"/><rect x="1186" y="284" width="11" height="70" fill="#a48c6b"/><rect x="1186" y="354" width="11" height="80" fill="#a28a69"/></g><rect x="713" y="155" width="478" height="226" fill="none" stroke="#333" stroke-width="1"/>
 <!-- opening strip between rooms -->
 <rect x="737" y="378" width="331" height="22" fill="#f3f3f4"/>
 <path d="M737 378.5H1068M737 399.5H1068" stroke="#555" stroke-width="0.8"/>
 <!-- dining floor -->
 <rect x="713" y="400" width="355" height="383" fill="#f7f7f7" stroke="#444" stroke-width="0.8"/>
 <rect x="1024" y="400" width="44" height="383" fill="#eff1f7"/>
 <rect x="759" y="400" width="10" height="383" fill="#eef0f6"/>
 <!-- small wood room -->
 <clipPath id="smclip"><rect x="1084" y="398" width="53" height="118"/></clipPath><g clip-path="url(#smclip)"><rect x="1084" y="390" width="9" height="41" fill="#a89072"/><rect x="1084" y="431" width="9" height="77" fill="#9c8466"/><rect x="1084" y="508" width="9" height="81" fill="#a89072"/><rect x="1093" y="359" width="9" height="78" fill="#9c8466"/><rect x="1093" y="437" width="9" height="82" fill="#937a5d"/><rect x="1102" y="389" width="9" height="75" fill="#a48b6d"/><rect x="1102" y="464" width="9" height="48" fill="#9f8769"/><rect x="1102" y="512" width="9" height="40" fill="#9f8769"/><rect x="1111" y="365" width="9" height="87" fill="#a89072"/><rect x="1111" y="452" width="9" height="67" fill="#a89072"/><rect x="1120" y="346" width="9" height="53" fill="#9f8769"/><rect x="1120" y="399" width="9" height="56" fill="#a89072"/><rect x="1120" y="455" width="9" height="58" fill="#a48b6d"/><rect x="1120" y="513" width="9" height="55" fill="#a48b6d"/><rect x="1129" y="378" width="9" height="56" fill="#a48b6d"/><rect x="1129" y="434" width="9" height="66" fill="#a89072"/><rect x="1129" y="500" width="9" height="43" fill="#937a5d"/></g><rect x="1084" y="398" width="53" height="118" fill="none" stroke="#333" stroke-width="0.8"/>
 <path d="M1098.5 399v116M1124.5 399v116" stroke="#888" stroke-width="1"/>
 <!-- right window -->
 <g stroke="#111" stroke-width="1" fill="#fff"><rect x="1068.5" y="615.5" width="16" height="118"/><rect x="1077" y="618" width="4" height="55" fill="none"/><rect x="1073" y="648" width="4" height="82" fill="none"/></g>
 <!-- bottom window -->
 <g stroke="#111" stroke-width="1" fill="#fff"><rect x="802.5" y="783" width="208" height="16"/><path d="M802.5 790.5h208"/><rect x="802.5" y="786.5" width="52" height="3.5" fill="none"/><rect x="842.5" y="791" width="50" height="3.5" fill="none"/><rect x="918.5" y="791" width="50" height="3.5" fill="none"/><rect x="957" y="786.5" width="52" height="3.5" fill="none"/></g>
 <!-- dark columns -->
 <rect x="713" y="377" width="24" height="23" fill="#3a3a3a"/>
 <rect x="713" y="760" width="25" height="22.5" fill="#343434"/>
 <rect x="1044" y="760.5" width="24" height="22.5" fill="#343434"/>

 <!-- LEFT RUG -->
 <rect x="716" y="188" width="102" height="159" fill="#13201a"/>
 <rect x="718" y="190" width="98" height="155" fill="#ddd3c0"/>
 <rect x="719.5" y="192" width="95" height="151" fill="none" stroke="#2a2420" stroke-width="1"/>
 <rect x="721" y="194" width="92" height="147" fill="url(#rugLb)"/>
 <rect x="748" y="219" width="57" height="99" fill="url(#rugL)" stroke="#2d2520" stroke-width="1.2"/>
 <!-- marble strip -->
 <rect x="713" y="200" width="35" height="139" fill="#f7f7f7"/>
 <path d="M716 210l10 25-4 20 12 30-5 25M740 205l-8 40 6 35M730 300l10 35" stroke="#bdbdbd" stroke-width="0.8" fill="none"/>
 <circle cx="727" cy="237" r="7" fill="#8a8a8a"/>
 <circle cx="727" cy="253" r="8" fill="#7c7c7c"/>
 <rect x="718" y="268" width="14" height="13" fill="#6a5c58"/>
 <rect x="724" y="290" width="2" height="34" fill="#333"/>
 <!-- plant TL -->
 <g opacity="0.75"><circle cx="727.7" cy="176.5" r="1.8" fill="#a3b59a"/><circle cx="747.3" cy="167.5" r="1.9" fill="#7b9a6b"/><circle cx="735.5" cy="168.5" r="1.6" fill="#a3b59a"/><circle cx="757.2" cy="180.8" r="2.0" fill="#6f8f5f"/><circle cx="731.3" cy="179.5" r="2.1" fill="#7b9a6b"/><circle cx="729.0" cy="162.8" r="1.3" fill="#6f8f5f"/><circle cx="745.6" cy="180.3" r="2.3" fill="#6f8f5f"/><circle cx="734.9" cy="183.9" r="1.9" fill="#8aa67a"/><circle cx="733.0" cy="164.3" r="1.8" fill="#6f8f5f"/><circle cx="738.5" cy="188.7" r="2.2" fill="#6f8f5f"/><circle cx="738.2" cy="180.0" r="1.2" fill="#5e7c50"/><circle cx="735.9" cy="171.0" r="2.4" fill="#6f8f5f"/><circle cx="727.2" cy="183.2" r="1.5" fill="#6f8f5f"/><circle cx="746.1" cy="171.4" r="2.6" fill="#a3b59a"/><circle cx="737.7" cy="175.6" r="2.3" fill="#8aa67a"/><circle cx="741.3" cy="177.7" r="1.2" fill="#5e7c50"/><circle cx="725.8" cy="181.2" r="1.5" fill="#8aa67a"/><circle cx="745.9" cy="175.3" r="1.4" fill="#a3b59a"/><circle cx="729.5" cy="169.1" r="2.6" fill="#8aa67a"/><circle cx="743.6" cy="162.7" r="1.4" fill="#a3b59a"/><circle cx="733.9" cy="176.5" r="2.4" fill="#5e7c50"/><circle cx="757.2" cy="171.1" r="1.5" fill="#6f8f5f"/><circle cx="727.4" cy="182.1" r="1.3" fill="#7b9a6b"/><circle cx="751.2" cy="172.5" r="1.2" fill="#5e7c50"/><circle cx="728.0" cy="163.7" r="1.3" fill="#a3b59a"/><circle cx="754.9" cy="179.6" r="1.2" fill="#8aa67a"/><circle cx="731.3" cy="182.3" r="2.5" fill="#8aa67a"/><circle cx="726.9" cy="174.2" r="1.5" fill="#a3b59a"/><circle cx="752.8" cy="185.6" r="1.5" fill="#7b9a6b"/><circle cx="748.4" cy="185.8" r="1.5" fill="#7b9a6b"/><circle cx="759.9" cy="168.4" r="1.3" fill="#7b9a6b"/><circle cx="748.3" cy="174.6" r="2.5" fill="#7b9a6b"/><circle cx="743.2" cy="186.4" r="1.8" fill="#5e7c50"/><circle cx="753.6" cy="166.7" r="1.4" fill="#7b9a6b"/><circle cx="741.0" cy="168.9" r="1.9" fill="#8aa67a"/><circle cx="733.1" cy="162.7" r="1.6" fill="#6f8f5f"/><circle cx="749.8" cy="169.4" r="1.3" fill="#6f8f5f"/><circle cx="733.5" cy="177.2" r="1.4" fill="#6f8f5f"/><circle cx="731.7" cy="181.9" r="1.3" fill="#8aa67a"/><circle cx="750.7" cy="181.2" r="2.1" fill="#5e7c50"/><circle cx="736.5" cy="161.6" r="2.0" fill="#8aa67a"/><circle cx="754.2" cy="167.9" r="2.2" fill="#5e7c50"/><circle cx="744.8" cy="172.5" r="1.9" fill="#6f8f5f"/><circle cx="740.6" cy="164.0" r="1.3" fill="#6f8f5f"/><circle cx="725.5" cy="169.1" r="2.3" fill="#8aa67a"/><circle cx="752.2" cy="168.2" r="2.5" fill="#a3b59a"/><circle cx="750.9" cy="165.5" r="2.4" fill="#6f8f5f"/><circle cx="727.8" cy="167.4" r="1.7" fill="#a3b59a"/><circle cx="747.4" cy="173.3" r="2.1" fill="#6f8f5f"/><circle cx="760.7" cy="172.4" r="1.7" fill="#5e7c50"/><circle cx="740.6" cy="160.9" r="1.8" fill="#a3b59a"/><circle cx="728.1" cy="170.0" r="1.2" fill="#7b9a6b"/><circle cx="730.8" cy="166.4" r="2.5" fill="#8aa67a"/><circle cx="755.4" cy="182.2" r="1.6" fill="#a3b59a"/><circle cx="752.9" cy="173.6" r="1.5" fill="#7b9a6b"/><circle cx="751.2" cy="186.3" r="1.9" fill="#a3b59a"/><circle cx="742.7" cy="183.2" r="1.5" fill="#5e7c50"/><circle cx="725.7" cy="179.0" r="2.4" fill="#8aa67a"/><circle cx="730.6" cy="181.1" r="1.5" fill="#5e7c50"/><circle cx="749.9" cy="180.1" r="2.2" fill="#6f8f5f"/><circle cx="752.0" cy="170.4" r="1.4" fill="#8aa67a"/><circle cx="723.1" cy="175.8" r="1.7" fill="#a3b59a"/><circle cx="725.7" cy="171.4" r="1.8" fill="#7b9a6b"/><circle cx="745.2" cy="174.3" r="1.3" fill="#7b9a6b"/><circle cx="738.1" cy="161.3" r="2.1" fill="#5e7c50"/><circle cx="727.3" cy="168.0" r="1.8" fill="#a3b59a"/><circle cx="760.0" cy="175.3" r="2.3" fill="#8aa67a"/><circle cx="747.8" cy="157.8" r="1.8" fill="#6f8f5f"/><circle cx="730.9" cy="163.6" r="2.5" fill="#5e7c50"/><circle cx="738.4" cy="166.5" r="1.6" fill="#a3b59a"/><circle cx="738.1" cy="159.4" r="2.2" fill="#7b9a6b"/><circle cx="746.5" cy="180.5" r="2.0" fill="#5e7c50"/><circle cx="755.4" cy="169.3" r="1.8" fill="#8aa67a"/><circle cx="747.0" cy="158.3" r="1.8" fill="#6f8f5f"/><circle cx="751.7" cy="166.8" r="1.8" fill="#a3b59a"/><circle cx="728.6" cy="162.2" r="2.0" fill="#a3b59a"/><circle cx="733.9" cy="163.7" r="1.8" fill="#5e7c50"/><circle cx="736.7" cy="167.1" r="1.5" fill="#6f8f5f"/><circle cx="758.0" cy="163.7" r="2.0" fill="#5e7c50"/><circle cx="744.9" cy="164.2" r="1.7" fill="#6f8f5f"/><circle cx="753.5" cy="178.3" r="1.8" fill="#7b9a6b"/><circle cx="739.0" cy="188.2" r="2.3" fill="#8aa67a"/><circle cx="758.5" cy="178.6" r="1.9" fill="#8aa67a"/><circle cx="734.6" cy="158.9" r="1.4" fill="#a3b59a"/><circle cx="725.1" cy="171.6" r="2.5" fill="#a3b59a"/><circle cx="722.5" cy="173.7" r="2.3" fill="#6f8f5f"/><circle cx="728.1" cy="177.4" r="2.1" fill="#7b9a6b"/><circle cx="723.8" cy="170.9" r="1.6" fill="#7b9a6b"/><circle cx="732.7" cy="159.2" r="1.5" fill="#7b9a6b"/><circle cx="753.6" cy="160.3" r="1.6" fill="#7b9a6b"/></g>
 <!-- lamps -->
 <circle cx="830" cy="287.5" r="16" fill="#fbfbfb" stroke="#d7d7d7" stroke-width="1"/>
 <circle cx="734.5" cy="356" r="16.5" fill="#fdfdfd" stroke="#d0d0d0" stroke-width="1"/>
 <path d="M726 362L838 283" stroke="#d8d8d8" stroke-width="1.2"/>
 <!-- round rug -->
 <circle cx="923.5" cy="257.5" r="64.5" fill="#ece7df" stroke="#e2dbcf" stroke-width="1"/>
 <path d="M899.5 250.7A24.9 24.9 0 0 1 903.8 242.1" stroke="#a88b66" stroke-width="3.0" fill="none" opacity="0.61"/>
 <path d="M958.7 234.8A41.9 41.9 0 0 1 965.0 251.7" stroke="#c4b095" stroke-width="2.9" fill="none" opacity="0.42"/>
 <path d="M886.5 245.6A38.9 38.9 0 0 1 894.0 232.1" stroke="#b89e7e" stroke-width="3.6" fill="none" opacity="0.43"/>
 <path d="M870.1 249.7A53.9 53.9 0 0 1 882.8 222.1" stroke="#a88b66" stroke-width="3.1" fill="none" opacity="0.35"/>
 <path d="M950.8 262.9A27.9 27.9 0 0 1 942.3 278.0" stroke="#c4b095" stroke-width="2.6" fill="none" opacity="0.65"/>
 <path d="M964.7 235.2A46.8 46.8 0 0 1 970.1 252.9" stroke="#b89e7e" stroke-width="3.5" fill="none" opacity="0.53"/>
 <path d="M968.0 288.8A54.4 54.4 0 0 1 958.2 299.5" stroke="#c4b095" stroke-width="2.0" fill="none" opacity="0.77"/>
 <path d="M954.1 218.2A49.8 49.8 0 0 1 967.3 233.6" stroke="#c4b095" stroke-width="3.6" fill="none" opacity="0.59"/>
 <path d="M957.2 234.4A40.9 40.9 0 0 1 964.3 255.0" stroke="#b89e7e" stroke-width="3.9" fill="none" opacity="0.72"/>
 <path d="M902.2 298.4A46.1 46.1 0 0 1 885.9 284.3" stroke="#b89e7e" stroke-width="2.9" fill="none" opacity="0.38"/>
 <path d="M966.5 254.3A43.1 43.1 0 0 1 965.2 268.5" stroke="#c4b095" stroke-width="1.8" fill="none" opacity="0.55"/>
 <path d="M929.1 240.3A18.1 18.1 0 0 1 935.5 244.0" stroke="#c4b095" stroke-width="1.9" fill="none" opacity="0.45"/>
 <path d="M975.6 272.3A54.1 54.1 0 0 1 961.8 295.8" stroke="#9c7f5c" stroke-width="1.6" fill="none" opacity="0.65"/>
 <path d="M958.2 239.0A39.3 39.3 0 0 1 962.4 251.6" stroke="#a88b66" stroke-width="2.1" fill="none" opacity="0.34"/>
 <path d="M909.3 247.2A17.5 17.5 0 0 1 911.8 244.4" stroke="#9c7f5c" stroke-width="2.0" fill="none" opacity="0.51"/>
 <path d="M943.9 263.1A21.2 21.2 0 0 1 936.7 274.1" stroke="#c4b095" stroke-width="2.2" fill="none" opacity="0.77"/>
 <path d="M944.9 234.6A31.3 31.3 0 0 1 952.1 244.6" stroke="#a88b66" stroke-width="3.6" fill="none" opacity="0.64"/>
 <path d="M963.1 242.0A42.5 42.5 0 0 1 965.9 260.9" stroke="#b89e7e" stroke-width="2.6" fill="none" opacity="0.65"/>
 <path d="M870.8 279.4A57.1 57.1 0 0 1 866.5 261.1" stroke="#c4b095" stroke-width="2.2" fill="none" opacity="0.48"/>
 <path d="M899.9 312.1A59.4 59.4 0 0 1 881.0 299.1" stroke="#9c7f5c" stroke-width="3.0" fill="none" opacity="0.39"/>
 <path d="M908.3 225.5A35.4 35.4 0 0 1 921.1 222.1" stroke="#a88b66" stroke-width="3.2" fill="none" opacity="0.66"/>
 <path d="M963.0 246.0A41.1 41.1 0 0 1 964.5 254.5" stroke="#9c7f5c" stroke-width="2.4" fill="none" opacity="0.61"/>
 <path d="M905.9 294.8A41.3 41.3 0 0 1 893.3 285.6" stroke="#9c7f5c" stroke-width="2.2" fill="none" opacity="0.49"/>
 <path d="M903.6 276.9A27.8 27.8 0 0 1 896.2 262.6" stroke="#b89e7e" stroke-width="1.6" fill="none" opacity="0.59"/>
 <path d="M928.4 285.3A28.3 28.3 0 0 1 911.7 283.2" stroke="#c4b095" stroke-width="2.1" fill="none" opacity="0.42"/>
 <path d="M959.5 282.6A43.9 43.9 0 0 1 943.0 296.8" stroke="#b89e7e" stroke-width="3.9" fill="none" opacity="0.64"/>
 <path d="M944.5 230.6A34.2 34.2 0 0 1 951.2 237.6" stroke="#c4b095" stroke-width="2.4" fill="none" opacity="0.62"/>
 <path d="M929.6 231.8A26.4 26.4 0 0 1 935.0 233.7" stroke="#b89e7e" stroke-width="3.9" fill="none" opacity="0.47"/>
 <path d="M894.7 302.8A53.7 53.7 0 0 1 873.8 278.0" stroke="#b89e7e" stroke-width="1.8" fill="none" opacity="0.61"/>
 <path d="M890.3 253.7A33.4 33.4 0 0 1 898.9 235.0" stroke="#9c7f5c" stroke-width="2.6" fill="none" opacity="0.61"/>
 <path d="M895.4 275.4A33.3 33.3 0 0 1 890.3 254.4" stroke="#c4b095" stroke-width="1.9" fill="none" opacity="0.33"/>
 <path d="M963.0 254.0A39.7 39.7 0 0 1 958.9 275.5" stroke="#9c7f5c" stroke-width="1.6" fill="none" opacity="0.53"/>
 <path d="M953.5 232.6A39.0 39.0 0 0 1 962.4 255.1" stroke="#a88b66" stroke-width="3.6" fill="none" opacity="0.77"/>
 <path d="M972.7 271.8A51.3 51.3 0 0 1 953.9 298.8" stroke="#c4b095" stroke-width="3.2" fill="none" opacity="0.74"/>
 <path d="M963.9 260.8A40.5 40.5 0 0 1 955.6 282.2" stroke="#a88b66" stroke-width="1.9" fill="none" opacity="0.45"/>
 <path d="M890.8 277.2A38.1 38.1 0 0 1 885.7 252.6" stroke="#9c7f5c" stroke-width="3.0" fill="none" opacity="0.48"/>
 <path d="M866.7 242.5A58.7 58.7 0 0 1 885.3 212.9" stroke="#a88b66" stroke-width="1.6" fill="none" opacity="0.43"/>
 <path d="M939.2 222.3A38.6 38.6 0 0 1 948.5 228.1" stroke="#b89e7e" stroke-width="3.5" fill="none" opacity="0.74"/>
 <path d="M975.3 259.9A51.9 51.9 0 0 1 967.4 285.1" stroke="#9c7f5c" stroke-width="3.6" fill="none" opacity="0.35"/>
 <path d="M904.8 240.3A25.4 25.4 0 0 1 914.3 233.8" stroke="#a88b66" stroke-width="1.6" fill="none" opacity="0.47"/>
 <path d="M931.9 204.7A53.4 53.4 0 0 1 943.4 207.9" stroke="#a88b66" stroke-width="1.6" fill="none" opacity="0.55"/>
 <path d="M969.2 285.0A53.3 53.3 0 0 1 952.6 302.1" stroke="#9c7f5c" stroke-width="2.2" fill="none" opacity="0.47"/>
 <path d="M899.1 277.8A31.7 31.7 0 0 1 893.6 268.1" stroke="#c4b095" stroke-width="2.1" fill="none" opacity="0.78"/>
 <path d="M905.0 250.8A19.7 19.7 0 0 1 911.4 242.0" stroke="#b89e7e" stroke-width="2.5" fill="none" opacity="0.36"/>
 <path d="M908.0 261.4A16.0 16.0 0 0 1 908.1 253.1" stroke="#a88b66" stroke-width="2.9" fill="none" opacity="0.61"/>
 <path d="M884.7 275.3A42.7 42.7 0 0 1 880.9 259.4" stroke="#c4b095" stroke-width="2.8" fill="none" opacity="0.65"/>
 <path d="M873.2 285.8A57.7 57.7 0 0 1 868.4 274.8" stroke="#a88b66" stroke-width="2.0" fill="none" opacity="0.44"/>
 <path d="M931.6 307.8A50.9 50.9 0 0 1 918.2 308.2" stroke="#9c7f5c" stroke-width="1.6" fill="none" opacity="0.47"/>
 <path d="M916.4 239.3A19.6 19.6 0 0 1 929.2 238.8" stroke="#c4b095" stroke-width="3.4" fill="none" opacity="0.72"/>
 <path d="M918.9 213.0A44.7 44.7 0 0 1 940.1 216.0" stroke="#a88b66" stroke-width="1.8" fill="none" opacity="0.60"/>
 <path d="M926.7 293.1A35.8 35.8 0 0 1 912.7 291.6" stroke="#c4b095" stroke-width="2.9" fill="none" opacity="0.59"/>
 <path d="M945.5 260.8A22.2 22.2 0 0 1 939.5 273.0" stroke="#c4b095" stroke-width="1.8" fill="none" opacity="0.72"/>
 <path d="M973.6 242.0A52.5 52.5 0 0 1 975.0 267.4" stroke="#b89e7e" stroke-width="3.5" fill="none" opacity="0.34"/>
 <path d="M923.4 238.6A18.9 18.9 0 0 1 935.1 242.6" stroke="#b89e7e" stroke-width="1.6" fill="none" opacity="0.47"/>
 <path d="M926.1 309.5A52.1 52.1 0 0 1 911.1 308.1" stroke="#c4b095" stroke-width="2.1" fill="none" opacity="0.61"/>
 <path d="M902.7 242.5A25.6 25.6 0 0 1 916.5 232.8" stroke="#c4b095" stroke-width="2.9" fill="none" opacity="0.77"/>
 <path d="M960.0 251.3A37.0 37.0 0 0 1 959.5 266.2" stroke="#c4b095" stroke-width="3.4" fill="none" opacity="0.40"/>
 <path d="M906.3 269.8A21.2 21.2 0 0 1 902.3 257.0" stroke="#c4b095" stroke-width="1.9" fill="none" opacity="0.55"/>
 <path d="M867.7 251.4A56.2 56.2 0 0 1 875.0 229.1" stroke="#9c7f5c" stroke-width="3.2" fill="none" opacity="0.42"/>
 <path d="M952.9 296.2A48.6 48.6 0 0 1 932.8 305.2" stroke="#9c7f5c" stroke-width="3.9" fill="none" opacity="0.72"/>
 <path d="M951.1 222.1A44.9 44.9 0 0 1 964.6 239.5" stroke="#b89e7e" stroke-width="3.0" fill="none" opacity="0.77"/>
 <path d="M920.3 285.5A28.1 28.1 0 0 1 905.0 278.7" stroke="#b89e7e" stroke-width="2.0" fill="none" opacity="0.59"/>
 <path d="M927.9 229.0A28.8 28.8 0 0 1 935.4 231.2" stroke="#b89e7e" stroke-width="4.0" fill="none" opacity="0.55"/>
 <path d="M941.5 226.9A35.5 35.5 0 0 1 955.8 242.7" stroke="#a88b66" stroke-width="2.9" fill="none" opacity="0.55"/>
 <path d="M880.2 288.8A53.4 53.4 0 0 1 870.2 260.7" stroke="#b89e7e" stroke-width="3.9" fill="none" opacity="0.53"/>
 <path d="M890.7 213.4A55.0 55.0 0 0 1 920.7 202.6" stroke="#9c7f5c" stroke-width="1.6" fill="none" opacity="0.43"/>
 <path d="M932.8 280.8A25.1 25.1 0 0 1 924.8 282.6" stroke="#a88b66" stroke-width="2.0" fill="none" opacity="0.65"/>
 <path d="M921.8 312.9A55.4 55.4 0 0 1 889.4 301.1" stroke="#a88b66" stroke-width="2.2" fill="none" opacity="0.52"/>
 <path d="M921.8 276.8A19.4 19.4 0 0 1 910.3 271.8" stroke="#9c7f5c" stroke-width="1.6" fill="none" opacity="0.53"/>
 <path d="M916.2 269.8A14.3 14.3 0 0 1 911.8 265.8" stroke="#c4b095" stroke-width="2.8" fill="none" opacity="0.42"/>
 <circle cx="921.5" cy="260.5" r="16" fill="#efebe5" opacity="0.8"/>
 <!-- coffee table -->
 <circle cx="978.3" cy="261" r="31" fill="#b1b1b2" stroke="#c0c0c0" stroke-width="1.5"/>
 <rect x="980" y="244" width="12" height="17" fill="#f4f4f4" stroke="#222" stroke-width="1.5" transform="rotate(25 986 252)"/>
 <rect x="964" y="259" width="5" height="15" fill="#5a4a3e" transform="rotate(15 966 266)"/>
 <!-- armchair top -->
 <g transform="rotate(-38 842 220)">
  <rect x="812" y="190" width="62" height="60" rx="20" fill="#b4b4b4" stroke="#9c9c9c" stroke-width="1"/>
  <rect x="822" y="204" width="44" height="40" rx="6" fill="#a3a3a3"/>
  <rect x="842" y="193" width="26" height="22" rx="5" fill="#5e5f62"/>
  <rect x="846" y="200" width="16" height="14" fill="#8d8d8e"/>
 </g>
 <g transform="rotate(-55 812 222)"><rect x="792" y="212" width="44" height="17" rx="3" fill="#747474"/><path d="M794 216h40M794 220h40M794 224h40" stroke="#9a9a9a" stroke-width="1" stroke-dasharray="2 2"/></g>
 <!-- right rug -->
 <rect x="1047" y="161" width="88" height="209" fill="url(#rugRb)" stroke="#5a3a33" stroke-width="2"/>
 <rect x="1074" y="187" width="61" height="155" fill="url(#rugR)" stroke="#cbb8a4" stroke-width="1"/>
 <!-- armchair bottom -->
 <g transform="rotate(53 1045.6 347)">
  <rect x="1007.6" y="314.5" width="76" height="65" rx="11" fill="#777573" stroke="#666" stroke-width="1"/>
  <path d="M1016 316h56l6 10-4 18-20 4-40-2z" fill="#b1b1b1"/>
  <rect x="1028.6" y="354" width="28" height="14" fill="#0e0e0e" transform="rotate(-8 1042 361)"/>
 </g>
 <!-- sofa -->
 <rect x="1135" y="157" width="56" height="215" fill="#d0cfcd"/>
 <rect x="1136" y="157" width="53" height="5" rx="2" fill="#111"/>
 <rect x="1184" y="157" width="5" height="215" fill="#111"/>
 <rect x="1136" y="367" width="53" height="5" rx="2" fill="#1a1a1a"/>
 <path d="M1136 230h48M1136 300h48" stroke="#b9b9b9" stroke-width="0.8" stroke-dasharray="4 2"/>
 <g stroke="#8f8f8f" stroke-width="0.6"><ellipse cx="1170" cy="178" rx="12" ry="7" fill="#c4c4c4" transform="rotate(25 1170 178)"/><ellipse cx="1172" cy="198" rx="13" ry="8" fill="#a9a9a9" transform="rotate(20 1172 198)"/><ellipse cx="1169" cy="228" rx="5" ry="14" fill="#b4b4b4" transform="rotate(-15 1169 228)"/><ellipse cx="1168" cy="252" rx="6" ry="12" fill="#e2e2e2"/><ellipse cx="1168" cy="298" rx="6" ry="13" fill="#dedede"/><ellipse cx="1166" cy="322" rx="5" ry="13" fill="#bcbcbc" transform="rotate(10 1166 322)"/><ellipse cx="1172" cy="342" rx="13" ry="8" fill="#a8a8a8" transform="rotate(-20 1172 342)"/><ellipse cx="1165" cy="356" rx="14" ry="7" fill="#cfcfcf" transform="rotate(-15 1165 356)"/></g>
 <!-- dimension lines upper -->
 <path d="M713 168.5H1191M726.5 155V381M1177.5 155V381M1047 372.5H1191" stroke="#7d7d7d" stroke-width="1"/>

 <!-- LEFT CABINETS -->
 <rect x="714.3" y="401.3" width="43.7" height="69.7" fill="#fefdf6" stroke="#7d8b9c" stroke-width="2.6"/>
 <path d="M713 443.5H758" stroke="#7d8b9c" stroke-width="2"/>
 <rect x="736" y="471" width="22" height="89" fill="url(#marble)"/>
 <rect x="714.3" y="471" width="22.7" height="60" fill="#fefdf6" stroke="#7d8b9c" stroke-width="2.6"/>
 <circle cx="744" cy="514" r="2.5" fill="#111"/><circle cx="751" cy="514" r="2.5" fill="#111"/>
 <rect x="714" y="531" width="23" height="38" fill="url(#marble)" stroke="#7d8b9c" stroke-width="2"/>
 <rect x="713" y="569" width="44" height="86" fill="#d0d0d0"/>
 <rect x="713" y="569" width="22" height="86" fill="#c8c8c8"/>
 <rect x="746" y="580" width="5" height="60" fill="#a7a7a7"/>
 <rect x="714.2" y="655" width="43.8" height="30" fill="url(#marble)" stroke="#7d8b9c" stroke-width="2.4"/>
 <rect x="714.3" y="685" width="21.7" height="60" fill="#fefdf6" stroke="#7d8b9c" stroke-width="2.6"/>
 <circle cx="719" cy="719" r="9" fill="#fbfbfb" stroke="#ddd" stroke-width="0.8"/>
 <rect x="736" y="685" width="22" height="60" fill="url(#marble)"/>
 <circle cx="719" cy="670" r="3" fill="#333"/><rect x="717" y="679" width="4" height="4" fill="#111"/>
 <ellipse cx="744" cy="668" rx="4" ry="5" fill="#b48a5e"/>
 <path d="M758.5 471V760" stroke="#e4c39f" stroke-width="1" stroke-dasharray="6 10"/>
 <path d="M726.5 400V782M1054.5 400V783M738 769.5H1044" stroke="#8e8e8e" stroke-width="1"/>
 <path d="M1023.5 400V783" stroke="#d6cfc6" stroke-width="1" stroke-dasharray="14 8"/>
 <!-- fridge box right -->
 <rect x="1024.5" y="429.5" width="43" height="53" fill="#fefefa" stroke="#bdbdbd" stroke-width="1"/>
 <path d="M1032.5 432V480" stroke="#999" stroke-width="1"/>

 <!-- ISLAND -->
 <rect x="846" y="501" width="108" height="207" fill="url(#marble)" stroke="#d5d0c9" stroke-width="1"/>
 <path d="M920 505c-3 12-6 20-14 30s-5 25-10 35M850 530c8 12 18 10 22 25M930 520c-2 25 4 40-6 60s-8 30-18 45M855 600c12 20 18 30 10 50M905 640c6 20-4 35-10 60M935 600c4 20 10 30 8 50M870 690c8-10 15-20 25-22" stroke="#bfa583" stroke-width="1" fill="none" opacity="0.9"/>
 <rect x="845" y="581.5" width="37" height="48.5" fill="#5a5a5a"/>
 <circle cx="863" cy="612" r="4" fill="none" stroke="#111" stroke-width="1.6"/>
 <path d="M866 609l22-10" stroke="#8a5a3a" stroke-width="2"/>
 <circle cx="912.5" cy="567.5" r="11" fill="#c1c1c1"/>
 <circle cx="912.5" cy="626" r="11" fill="#c1c1c1"/>
 <rect x="897" y="657" width="22" height="22" fill="#c99e70" transform="rotate(-30 908 668)"/>
 <circle cx="898" cy="660" r="5" fill="#8a7868"/>
 <path d="M844 520V700" stroke="#333" stroke-width="1.6" stroke-dasharray="10 30"/>
 <!-- stools -->
 <g fill="#ebe8e3" stroke="#c2a47c" stroke-width="1.6"><ellipse cx="964" cy="537" rx="8.5" ry="13"/><ellipse cx="964" cy="605" rx="8.5" ry="13"/><ellipse cx="964" cy="672" rx="8.5" ry="13"/></g>
 <!-- plants bottom -->
 <g opacity="0.85"><circle cx="784.2" cy="762.2" r="1.9" fill="#6f8f5f"/><circle cx="794.4" cy="760.4" r="1.9" fill="#6f8f5f"/><circle cx="782.5" cy="770.4" r="1.4" fill="#7b9a6b"/><circle cx="803.8" cy="765.6" r="1.8" fill="#7b9a6b"/><circle cx="812.7" cy="755.2" r="1.6" fill="#a3b59a"/><circle cx="790.0" cy="763.0" r="2.5" fill="#a3b59a"/><circle cx="814.6" cy="756.0" r="1.6" fill="#7b9a6b"/><circle cx="802.7" cy="773.7" r="1.4" fill="#5e7c50"/><circle cx="797.6" cy="759.6" r="1.4" fill="#8aa67a"/><circle cx="807.6" cy="762.6" r="1.5" fill="#5e7c50"/><circle cx="782.9" cy="762.1" r="1.4" fill="#7b9a6b"/><circle cx="787.0" cy="761.5" r="2.2" fill="#8aa67a"/><circle cx="799.2" cy="760.3" r="2.4" fill="#a3b59a"/><circle cx="786.0" cy="754.2" r="2.1" fill="#7b9a6b"/><circle cx="778.9" cy="759.3" r="2.0" fill="#7b9a6b"/><circle cx="809.5" cy="773.6" r="2.5" fill="#5e7c50"/><circle cx="792.5" cy="770.2" r="1.5" fill="#8aa67a"/><circle cx="815.8" cy="761.8" r="2.4" fill="#8aa67a"/><circle cx="801.0" cy="765.5" r="1.3" fill="#a3b59a"/><circle cx="803.4" cy="753.0" r="1.5" fill="#8aa67a"/><circle cx="784.6" cy="751.7" r="1.5" fill="#6f8f5f"/><circle cx="789.1" cy="748.1" r="1.4" fill="#5e7c50"/><circle cx="779.6" cy="761.5" r="2.6" fill="#7b9a6b"/><circle cx="805.9" cy="749.6" r="1.3" fill="#a3b59a"/><circle cx="811.4" cy="764.8" r="2.5" fill="#7b9a6b"/><circle cx="788.4" cy="762.8" r="1.5" fill="#6f8f5f"/><circle cx="807.7" cy="748.6" r="2.0" fill="#6f8f5f"/><circle cx="808.0" cy="771.9" r="2.3" fill="#6f8f5f"/><circle cx="790.7" cy="771.7" r="1.7" fill="#7b9a6b"/><circle cx="800.0" cy="771.5" r="2.4" fill="#6f8f5f"/><circle cx="802.6" cy="771.8" r="1.8" fill="#5e7c50"/><circle cx="799.7" cy="768.1" r="2.3" fill="#7b9a6b"/><circle cx="794.4" cy="766.2" r="2.0" fill="#a3b59a"/><circle cx="802.5" cy="773.4" r="2.3" fill="#5e7c50"/><circle cx="796.0" cy="777.3" r="2.3" fill="#8aa67a"/><circle cx="781.3" cy="770.5" r="2.2" fill="#7b9a6b"/><circle cx="798.9" cy="748.1" r="1.5" fill="#a3b59a"/><circle cx="804.1" cy="775.1" r="1.9" fill="#5e7c50"/><circle cx="808.9" cy="762.6" r="1.3" fill="#7b9a6b"/><circle cx="794.2" cy="777.5" r="1.7" fill="#5e7c50"/><circle cx="788.9" cy="751.8" r="1.3" fill="#7b9a6b"/><circle cx="783.0" cy="761.0" r="2.2" fill="#8aa67a"/><circle cx="798.5" cy="746.2" r="1.4" fill="#6f8f5f"/><circle cx="804.6" cy="766.9" r="1.8" fill="#a3b59a"/><circle cx="805.4" cy="764.2" r="1.2" fill="#a3b59a"/><circle cx="796.4" cy="770.4" r="2.0" fill="#5e7c50"/><circle cx="777.4" cy="761.2" r="2.4" fill="#7b9a6b"/><circle cx="807.8" cy="768.2" r="2.0" fill="#6f8f5f"/><circle cx="787.4" cy="748.4" r="2.5" fill="#a3b59a"/><circle cx="804.4" cy="771.3" r="2.4" fill="#8aa67a"/><circle cx="782.1" cy="758.8" r="2.5" fill="#a3b59a"/><circle cx="784.2" cy="767.5" r="1.6" fill="#7b9a6b"/><circle cx="783.3" cy="759.9" r="2.0" fill="#5e7c50"/><circle cx="793.5" cy="775.2" r="1.2" fill="#5e7c50"/><circle cx="799.2" cy="749.9" r="1.8" fill="#8aa67a"/><circle cx="795.2" cy="758.6" r="2.2" fill="#5e7c50"/><circle cx="815.9" cy="766.9" r="1.3" fill="#5e7c50"/><circle cx="807.9" cy="756.1" r="1.6" fill="#a3b59a"/><circle cx="797.1" cy="758.6" r="2.5" fill="#6f8f5f"/><circle cx="794.7" cy="751.2" r="2.0" fill="#8aa67a"/><circle cx="808.8" cy="770.4" r="1.4" fill="#a3b59a"/><circle cx="804.7" cy="754.7" r="1.4" fill="#8aa67a"/><circle cx="781.7" cy="766.6" r="2.0" fill="#a3b59a"/><circle cx="786.4" cy="751.8" r="2.3" fill="#5e7c50"/><circle cx="777.4" cy="758.9" r="2.2" fill="#5e7c50"/><circle cx="797.5" cy="767.4" r="2.3" fill="#5e7c50"/><circle cx="788.5" cy="755.2" r="2.1" fill="#5e7c50"/><circle cx="794.4" cy="748.8" r="2.1" fill="#8aa67a"/><circle cx="797.2" cy="755.0" r="1.9" fill="#8aa67a"/><circle cx="791.9" cy="756.2" r="2.1" fill="#6f8f5f"/><circle cx="807.2" cy="762.5" r="2.1" fill="#6f8f5f"/><circle cx="808.8" cy="769.1" r="2.3" fill="#6f8f5f"/><circle cx="803.8" cy="758.7" r="2.1" fill="#8aa67a"/><circle cx="787.3" cy="769.9" r="1.7" fill="#8aa67a"/><circle cx="789.7" cy="762.2" r="2.3" fill="#6f8f5f"/><circle cx="779.9" cy="766.7" r="1.8" fill="#8aa67a"/><circle cx="796.8" cy="752.0" r="1.7" fill="#8aa67a"/><circle cx="785.7" cy="748.9" r="1.6" fill="#5e7c50"/><circle cx="798.0" cy="747.5" r="1.8" fill="#8aa67a"/><circle cx="792.8" cy="765.6" r="1.3" fill="#5e7c50"/><circle cx="1032.0" cy="768.0" r="2.3" fill="#a3b59a"/><circle cx="1001.3" cy="765.3" r="1.3" fill="#6f8f5f"/><circle cx="1022.7" cy="774.7" r="2.2" fill="#6f8f5f"/><circle cx="1001.5" cy="762.5" r="1.6" fill="#5e7c50"/><circle cx="1026.5" cy="769.5" r="1.7" fill="#5e7c50"/><circle cx="1031.5" cy="771.1" r="2.0" fill="#7b9a6b"/><circle cx="1032.6" cy="754.4" r="1.8" fill="#5e7c50"/><circle cx="1022.6" cy="753.7" r="1.5" fill="#5e7c50"/><circle cx="1035.7" cy="759.3" r="1.5" fill="#7b9a6b"/><circle cx="1011.2" cy="769.4" r="2.1" fill="#5e7c50"/><circle cx="1003.6" cy="754.7" r="1.7" fill="#7b9a6b"/><circle cx="1012.9" cy="766.0" r="2.0" fill="#7b9a6b"/><circle cx="1026.8" cy="774.5" r="2.3" fill="#5e7c50"/><circle cx="1019.9" cy="765.8" r="2.0" fill="#8aa67a"/><circle cx="1034.8" cy="759.3" r="1.3" fill="#a3b59a"/><circle cx="1002.0" cy="757.9" r="1.7" fill="#6f8f5f"/><circle cx="1018.0" cy="767.1" r="1.3" fill="#5e7c50"/><circle cx="1014.0" cy="757.5" r="1.5" fill="#a3b59a"/><circle cx="1022.2" cy="775.8" r="1.7" fill="#7b9a6b"/><circle cx="1007.5" cy="764.4" r="2.1" fill="#5e7c50"/><circle cx="1004.4" cy="762.5" r="2.2" fill="#6f8f5f"/><circle cx="1030.0" cy="756.8" r="2.4" fill="#5e7c50"/><circle cx="1025.3" cy="748.3" r="2.5" fill="#a3b59a"/><circle cx="1009.8" cy="753.1" r="2.3" fill="#6f8f5f"/><circle cx="1007.6" cy="766.9" r="1.5" fill="#8aa67a"/><circle cx="1027.3" cy="772.9" r="1.6" fill="#8aa67a"/><circle cx="1007.8" cy="769.5" r="2.6" fill="#5e7c50"/><circle cx="1029.3" cy="765.2" r="1.6" fill="#6f8f5f"/><circle cx="1029.7" cy="774.7" r="2.3" fill="#6f8f5f"/><circle cx="1032.8" cy="763.2" r="1.6" fill="#6f8f5f"/><circle cx="1022.9" cy="771.1" r="1.5" fill="#7b9a6b"/><circle cx="1015.8" cy="749.9" r="1.8" fill="#8aa67a"/><circle cx="1029.0" cy="755.8" r="2.1" fill="#5e7c50"/><circle cx="1032.9" cy="757.8" r="1.9" fill="#5e7c50"/><circle cx="1003.0" cy="771.0" r="2.3" fill="#7b9a6b"/><circle cx="1034.5" cy="770.2" r="1.3" fill="#a3b59a"/><circle cx="1035.9" cy="757.4" r="2.6" fill="#a3b59a"/><circle cx="1023.9" cy="748.5" r="2.1" fill="#6f8f5f"/><circle cx="1019.2" cy="763.7" r="2.5" fill="#a3b59a"/><circle cx="1009.6" cy="764.5" r="2.0" fill="#a3b59a"/><circle cx="1023.4" cy="767.3" r="1.4" fill="#5e7c50"/><circle cx="1034.1" cy="754.1" r="2.1" fill="#8aa67a"/><circle cx="1029.3" cy="761.6" r="1.3" fill="#7b9a6b"/><circle cx="1011.4" cy="759.1" r="2.3" fill="#8aa67a"/><circle cx="1029.3" cy="750.1" r="1.7" fill="#6f8f5f"/><circle cx="1008.1" cy="754.3" r="2.2" fill="#a3b59a"/><circle cx="1034.0" cy="768.9" r="2.4" fill="#7b9a6b"/><circle cx="1013.1" cy="775.4" r="1.5" fill="#a3b59a"/><circle cx="1011.7" cy="749.1" r="1.5" fill="#a3b59a"/><circle cx="1005.0" cy="758.9" r="2.5" fill="#8aa67a"/><circle cx="1030.0" cy="760.0" r="1.3" fill="#a3b59a"/><circle cx="1014.3" cy="772.3" r="1.7" fill="#6f8f5f"/><circle cx="1016.5" cy="757.2" r="2.1" fill="#a3b59a"/><circle cx="1018.6" cy="747.8" r="2.1" fill="#6f8f5f"/><circle cx="1031.2" cy="762.8" r="1.5" fill="#a3b59a"/><circle cx="1006.5" cy="757.8" r="2.4" fill="#6f8f5f"/><circle cx="1028.5" cy="750.8" r="1.4" fill="#7b9a6b"/><circle cx="1005.5" cy="750.9" r="2.5" fill="#5e7c50"/><circle cx="1019.5" cy="750.1" r="1.6" fill="#6f8f5f"/><circle cx="1024.3" cy="775.0" r="1.6" fill="#5e7c50"/><circle cx="1017.0" cy="772.8" r="1.8" fill="#5e7c50"/><circle cx="1014.3" cy="765.4" r="1.3" fill="#7b9a6b"/><circle cx="1011.6" cy="749.9" r="1.5" fill="#8aa67a"/><circle cx="1032.3" cy="764.5" r="1.3" fill="#6f8f5f"/><circle cx="1038.5" cy="765.2" r="1.8" fill="#a3b59a"/><circle cx="1036.2" cy="768.8" r="2.5" fill="#a3b59a"/><circle cx="1024.8" cy="767.6" r="2.3" fill="#8aa67a"/><circle cx="1010.3" cy="768.1" r="2.1" fill="#a3b59a"/><circle cx="1016.7" cy="749.6" r="2.6" fill="#5e7c50"/><circle cx="1023.0" cy="749.4" r="1.9" fill="#7b9a6b"/><circle cx="1018.4" cy="768.9" r="2.1" fill="#5e7c50"/><circle cx="1028.7" cy="768.1" r="1.7" fill="#7b9a6b"/><circle cx="1017.3" cy="766.9" r="1.6" fill="#8aa67a"/><circle cx="1008.4" cy="759.9" r="1.7" fill="#8aa67a"/><circle cx="1011.5" cy="762.0" r="2.6" fill="#8aa67a"/><circle cx="1002.2" cy="760.6" r="2.0" fill="#8aa67a"/><circle cx="1035.0" cy="764.2" r="1.4" fill="#6f8f5f"/><circle cx="1006.2" cy="763.4" r="1.7" fill="#5e7c50"/><circle cx="1029.8" cy="757.9" r="2.4" fill="#a3b59a"/><circle cx="1002.7" cy="766.0" r="2.5" fill="#8aa67a"/></g>

 <!-- labels -->
 <g font-family="Liberation Sans" font-weight="700" font-size="13.5" fill="#2b2b2b" stroke="#fff" stroke-width="2.5" paint-order="stroke" text-anchor="middle">
  <text x="951" y="188">6843</text>
  <text x="1129" y="357">1760</text>
  <text x="890" y="759">4396</text>
  <text transform="translate(746 262) rotate(-90)">3196</text>
  <text transform="translate(746 579) rotate(-90)">5166</text>
  <text transform="translate(1155 266) rotate(90)">3251</text>
  <text transform="translate(1034 570) rotate(90)">5436</text>
  <text transform="translate(1104 456) rotate(90)">1688</text>
 </g>
 <g font-family="Liberation Sans" font-weight="700" font-size="14.2" fill="#2b2f36" text-anchor="middle">
  <text x="914.5" y="437">Dining room</text>
  <text x="914" y="452">51.19m²</text>
 </g>
 <!-- north arrow -->
 <path d="M420.5 80l-4 14h8z" fill="#7a7e85"/><path d="M416.5 94h8l-4 15z" fill="#1f6ff0"/>
</svg>

<!-- RIGHT PANEL -->
<div class="abs" style="left:1650px;top:55px;width:256px;height:229px;background:#f5f6f7;border-top-left-radius:8px;overflow:hidden;box-shadow:-2px 0 6px rgba(0,0,0,0.04)">
 <svg class="abs" style="left:11px;top:9px" width="6" height="14" viewBox="0 0 6 14"><g fill="#5d6168"><rect x="0" y="0" width="1.6" height="1.6"/><rect x="4" y="0" width="1.6" height="1.6"/><rect x="0" y="4" width="1.6" height="1.6"/><rect x="4" y="4" width="1.6" height="1.6"/><rect x="0" y="8" width="1.6" height="1.6"/><rect x="4" y="8" width="1.6" height="1.6"/><rect x="0" y="12" width="1.6" height="1.6"/><rect x="4" y="12" width="1.6" height="1.6"/></g></svg>
 <div class="abs" style="left:22px;top:0;width:121px;height:31px;background:#fff"></div>
 <div class="abs" style="left:66px;top:8px;font-size:14px;font-weight:700;color:#1f74ef">View</div>
 <div class="abs" style="left:162px;top:8px;font-size:13.5px;font-weight:700;color:#4a4d52;white-space:nowrap">Select Room</div>
 <svg class="abs" style="left:0;top:31px" width="256" height="198" viewBox="0 0 256 198">
  <defs>
   <linearGradient id="sky" x1="0" y1="0" x2="0" y2="1"><stop offset="0" stop-color="#dcecf1"/><stop offset="0.18" stop-color="#eef4f6"/><stop offset="0.3" stop-color="#f5f7f8" stop-opacity="0.95"/><stop offset="0.45" stop-color="#f6f7f7" stop-opacity="0.6"/><stop offset="0.7" stop-color="#f6f7f7" stop-opacity="0.1"/><stop offset="1" stop-color="#f6f7f7" stop-opacity="0"/></linearGradient>
   <pattern id="tile" width="10" height="10" patternUnits="userSpaceOnUse" patternTransform="matrix(0.94,-0.34,0.6,0.85,0,0)"><rect width="10" height="10" fill="#fbfbfb"/><rect x="1.5" y="1.5" width="8.5" height="8.5" fill="#e9eaea"/></pattern>
   <linearGradient id="fade" x1="0" y1="0" x2="0" y2="1"><stop offset="0" stop-color="#f6f7f7" stop-opacity="1"/><stop offset="0.35" stop-color="#f6f7f7" stop-opacity="0.6"/><stop offset="1" stop-color="#f6f7f7" stop-opacity="0"/></linearGradient>
  </defs>
  <rect width="256" height="198" fill="url(#tile)"/>
  <rect width="256" height="198" fill="url(#sky)"/>
    <!-- 3D house -->
  <polygon points="28,84 140,62 223,77 212,115 142,139 88,167 38,125" fill="#e6e6e6"/>
  <polygon points="40,87 140,67 215,80 205,110 150,120 90,112 47,118" fill="#f2f2f2"/>
  <polygon points="28,85 84,108 89,167 38,126" fill="#f0f0f0" stroke="#1e1e1e" stroke-width="2.2"/><polygon points="34,92 80,112 85,158 43,125" fill="#3b3732" stroke="#1e1e1e" stroke-width="1.5"/>
  <polygon points="38,98 78,115 82,152 46,124" fill="#4d463e"/>
  <g stroke="#7a6650" stroke-width="1.2" opacity="0.8"><path d="M44 104v22M52 108v24M60 111v26M68 114v28M76 117v30"/></g>
  <polygon points="81,111 166,84 170,131 89,167" fill="#efefef" stroke="#1e1e1e" stroke-width="2.6" stroke-linejoin="round"/>
  <polygon points="166,84 196,94 200,140 170,131" fill="#f3f3f3" stroke="#1e1e1e" stroke-width="2.2"/>
  <polygon points="140,62 223,77 212,115 200,116 196,94 182,88 146,79" fill="#efefef" stroke="#1e1e1e" stroke-width="2.2"/>
  <g stroke="#1e1e1e" stroke-width="2.4"><path d="M152 65v17M160 66v17M168 68v17M176 70v17M184 72v17M192 73v17M200 75v17M208 76v17"/></g>
  <polygon points="28,84 140,62 143,65 31,87" fill="#2a2a2a"/>
  
  <polygon points="99,113 112,109 115,152 102,156" fill="#c7a676" stroke="#333" stroke-width="1.2"/>
  <polygon points="113,108 126,104 128,146 115,151" fill="#c7a676" stroke="#333" stroke-width="1.2"/>
  <polygon points="102,105 131,96 132,106 102,115" fill="#3e3e3e"/>
  <polygon points="150,143 167,136 175,140 158,148" fill="#c89a62" stroke="#222" stroke-width="1.2"/>
  <polygon points="200,119 215,113 211,134 200,138" fill="#8a8a8a" stroke="#222" stroke-width="1"/>
  <path d="M4 171L16 183M4 176L10 182" stroke="#333" stroke-width="0.8"/>
 </svg>
</div>
<div class="abs" style="left:1650px;top:284px;width:256px;height:9px;background-color:#e3e5e6;background-image:linear-gradient(90deg,#eeeff0 1.5px,transparent 1.5px);background-size:34.867px 9px;background-position:21.55px 0"></div>
<div class="abs" style="left:1650px;top:293px;width:256px;height:613px;background:#fff;border-top-left-radius:8px;border-bottom-left-radius:8px;overflow:hidden;box-shadow:-2px 0 6px rgba(0,0,0,0.04)">
 <div class="abs" style="left:0;top:0;width:256px;height:37px;background:#f6f6f7"></div>
 <svg class="abs" style="left:12px;top:12px" width="6" height="14" viewBox="0 0 6 14"><g fill="#5d6168"><rect x="0" y="0" width="1.6" height="1.6"/><rect x="4" y="0" width="1.6" height="1.6"/><rect x="0" y="4" width="1.6" height="1.6"/><rect x="4" y="4" width="1.6" height="1.6"/><rect x="0" y="8" width="1.6" height="1.6"/><rect x="4" y="8" width="1.6" height="1.6"/><rect x="0" y="12" width="1.6" height="1.6"/><rect x="4" y="12" width="1.6" height="1.6"/></g></svg>
 <div class="abs" style="left:22px;top:10.5px;font-size:15.8px;font-weight:700;color:#2a2c30">Floor</div>
 <svg class="abs" style="left:244px;top:12px" width="12" height="12" viewBox="0 0 12 12"><path d="M1 11L11 1M1 11V7M1 11h4M11 1H7M11 1v4" fill="none" stroke="#a9adb3" stroke-width="1.2"/></svg>
 <div class="abs" style="left:14px;top:51px;font-size:13px;font-weight:700;color:#2a2c30">Basic</div>
 <svg class="abs" style="left:236px;top:55px" width="13" height="8" viewBox="0 0 13 8"><path d="M1 7l5.5-5.5L12 7" fill="none" stroke="#555" stroke-width="1.3"/></svg>
 <div class="abs lab" style="top:86px">Interior area</div>
 <svg class="abs" style="left:98px;top:88px" width="8" height="11" viewBox="0 0 8 11"><path d="M1 4l3-3 3 3M1 7l3 3 3-3" fill="none" stroke="#c3c3c3" stroke-width="1"/></svg>
 <svg class="abs" style="left:113px;top:87px" width="14" height="14" viewBox="0 0 14 14"><circle cx="7" cy="7" r="6.8" fill="#cfcfcf"/><circle cx="7.8" cy="3.7" r="1.1" fill="#fff"/><path d="M7.2 6l-1 5" stroke="#fff" stroke-width="1.6"/></svg>
 <div class="abs inp" style="top:81px;height:26px"><span class="v">53.58</span><span class="u" style="left:60px">m²</span></div>
 <div class="abs lab" style="top:124px">Room height</div>
 <svg class="abs" style="left:100px;top:125px" width="14" height="14" viewBox="0 0 14 14"><circle cx="7" cy="7" r="6.8" fill="#cfcfcf"/><circle cx="7.8" cy="3.7" r="1.1" fill="#fff"/><path d="M7.2 6l-1 5" stroke="#fff" stroke-width="1.6"/></svg>
 <div class="abs inp" style="top:118px;height:27px"><span class="v">2600</span><span class="u" style="left:53px">mm</span></div>
 <div class="abs lab" style="top:161px">Slab thickness</div>
 <div class="abs inp" style="top:156px;height:26px"><span class="v">120</span><span class="u" style="left:53px">mm</span></div>
 <div class="abs" style="left:0;top:206px;width:256px;height:1px;background:#e9e9ea"></div>
 <div class="abs" style="left:14px;top:221px;font-size:13.6px;font-weight:700;color:#2a2c30">Opacity</div>
 <svg class="abs" style="left:236px;top:225px" width="13" height="8" viewBox="0 0 13 8"><path d="M1 7l5.5-5.5L12 7" fill="none" stroke="#555" stroke-width="1.3"/></svg>
 <div class="abs lab" style="top:256px">Wall</div>
 <div class="abs lab" style="top:293px">Floor</div>
 <svg class="abs" style="left:60px;top:261px" width="12" height="43" viewBox="0 0 12 43"><path d="M11 0.5H5.5V13M5.5 30v12.5H11" fill="none" stroke="#c9c9c9" stroke-width="1"/><rect x="2" y="15.5" width="7" height="11.5" rx="3.5" fill="none" stroke="#333" stroke-width="1.6"/><path d="M5.5 18v6.5" stroke="#333" stroke-width="1.1"/></svg>
 <div class="abs" style="left:78px;top:262.8px;width:106px;height:1.8px;background:#1f74ef"></div>
 <div class="abs knob" style="top:259.6px"></div>
 <div class="abs" style="left:78px;top:300px;width:106px;height:1.8px;background:#1f74ef"></div>
 <div class="abs knob" style="top:296.8px"></div>
 <div class="abs inp" style="left:194.5px;width:56px;top:250px;height:26px"><span class="v" style="left:9px">100</span><span class="u" style="left:37px">%</span></div>
 <div class="abs inp" style="left:194.5px;width:56px;top:288px;height:26px"><span class="v" style="left:9px">100</span><span class="u" style="left:37px">%</span></div>
</div>

<!-- RED ARROW -->
<svg class="abs" style="left:0;top:0" width="300" height="400" viewBox="0 0 300 400"><polygon points="102.3,238.5 132.6,243.7 127.7,250.3 215,334.7 117.4,262 112.1,266.8" fill="#f83b3b"/></svg>
</body></html>
